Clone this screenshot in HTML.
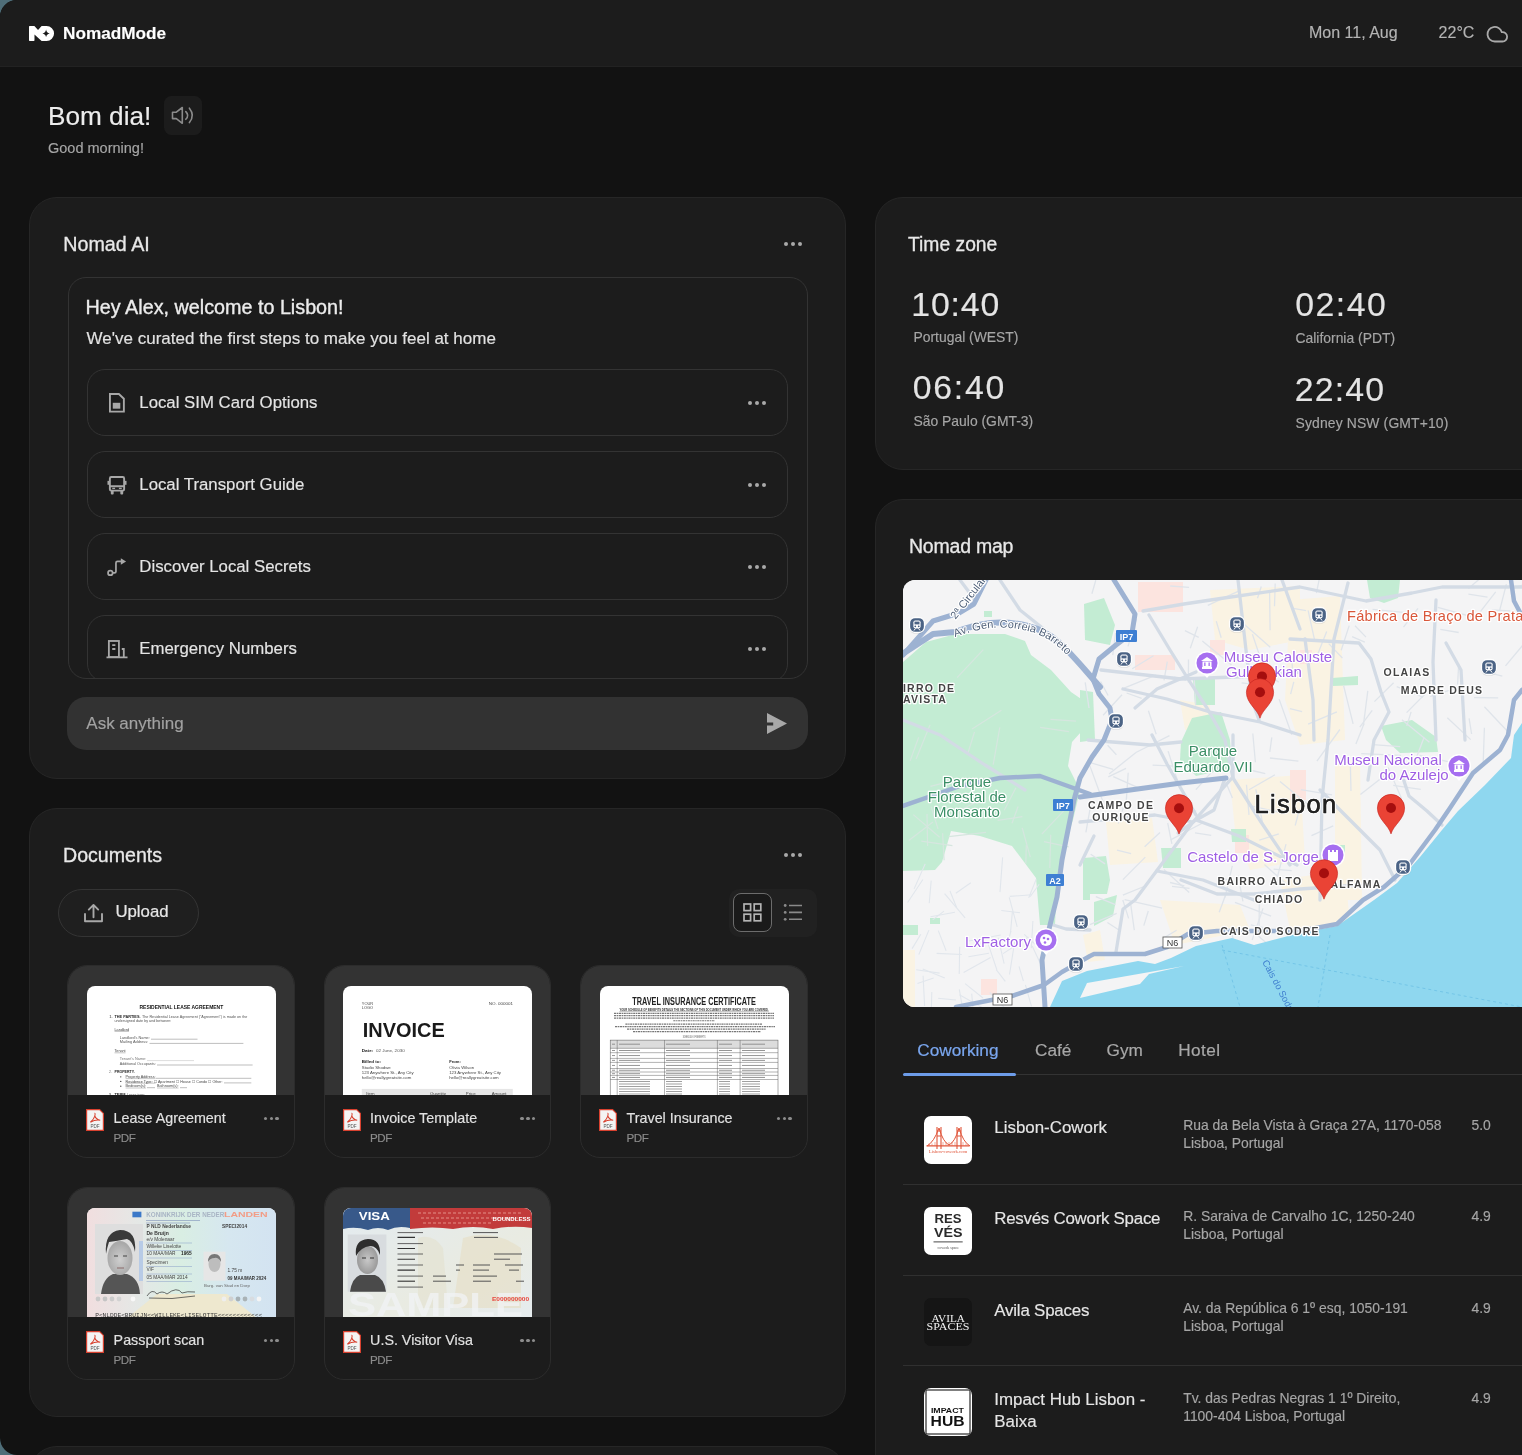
<!DOCTYPE html><html><head><meta charset="utf-8"><style>
html,body{margin:0;padding:0;width:1522px;height:1455px;overflow:hidden;background:#4f6e79;}
*{box-sizing:border-box;}
.win{position:absolute;left:0;top:0;width:1600px;height:1455px;background:#121212;border-radius:17px 0 0 17px;overflow:hidden;font-family:"Liberation Sans",sans-serif;}
.a{position:absolute;}
.t{position:absolute;white-space:nowrap;line-height:1;-webkit-text-stroke-width:0.15px;}
.win{will-change:transform;}
svg{position:absolute;overflow:visible;}
</style></head><body><div class="win">
<div class="a" style="left:0px;top:0px;width:1600px;height:67px;background:#1c1c1c;border-bottom:1px solid #222;"></div>
<svg style="left:28.6px;top:26px" width="25" height="15" viewBox="0 0 24.6 14.7"><path d="M0.6 0 H5.3 L8.9 3.8 L12.4 0 H17.3 A7.35 7.35 0 0 1 17.3 14.7 H12.4 L5.4 8.3 V14.1 Q5.4 14.7 4.8 14.7 H0.6 Q0 14.7 0 14.1 V0.6 Q0 0 0.6 0Z" fill="#fff"/><path d="M16.8 3.4 Q17.3 6.8 20.4 7.35 Q17.3 7.9 16.8 11.1 Q16.3 7.9 13.2 7.35 Q16.3 6.8 16.8 3.4Z" fill="#1c1c1c"/></svg>
<div class="t " style="left:63.00px;top:25.44px;font-size:17.2px;color:#ffffff;font-weight:700;">NomadMode</div>
<div class="t " style="left:1309.00px;top:25.06px;font-size:16px;color:#b4b4b4;font-weight:400;">Mon 11, Aug</div>
<div class="t " style="left:1438.60px;top:25.06px;font-size:16px;color:#b4b4b4;font-weight:400;">22°C</div>
<svg style="left:1485.2px;top:24.8px" width="23" height="18" viewBox="0 0 23 18"><path d="M9.8 16.5 H17.4 A4.7 4.7 0 1 0 16.8 7.14 A7.3 7.3 0 1 0 9.8 16.5Z" fill="none" stroke="#aaaaaa" stroke-width="1.8" stroke-linejoin="round"/></svg>
<div class="t " style="left:48.00px;top:102.62px;font-size:26.2px;color:#ececec;font-weight:400;">Bom dia!</div>
<div class="a" style="left:164px;top:96px;width:38px;height:39px;background:#1c1c1c;border-radius:7.5px;"></div>
<svg style="left:171px;top:106px" width="24" height="19" viewBox="0 0 24 19"><path d="M1.5 6.2 H5.3 L11.3 1.5 V17.3 L5.3 12.6 H1.5Z" fill="none" stroke="#8a8a8a" stroke-width="1.6" stroke-linejoin="round"/><path d="M14.8 5.6 Q18.6 9.4 14.8 13.3" fill="none" stroke="#8a8a8a" stroke-width="1.6" stroke-linecap="round"/><path d="M18.4 2.2 Q24.2 9.4 18.4 16.6" fill="none" stroke="#8a8a8a" stroke-width="1.6" stroke-linecap="round"/></svg>
<div class="t " style="left:48.00px;top:140.73px;font-size:14.5px;color:#a6a6a6;font-weight:400;">Good morning!</div>
<div class="a" style="left:28.5px;top:196.5px;width:817px;height:582px;background:#1c1c1c;border:1px solid #262626;border-radius:28px;"></div>
<div class="t " style="left:63.30px;top:235.12px;font-size:19.7px;color:#e8e8e8;font-weight:400;-webkit-text-stroke:0.3px #e8e8e8;">Nomad AI</div>
<div class="a" style="left:784px;top:242px;width:4px;height:4px;border-radius:50%;background:#a9a9a9"></div><div class="a" style="left:791px;top:242px;width:4px;height:4px;border-radius:50%;background:#a9a9a9"></div><div class="a" style="left:798px;top:242px;width:4px;height:4px;border-radius:50%;background:#a9a9a9"></div>
<div class="a" style="left:67.5px;top:277px;width:740px;height:402px;border:1px solid #333;border-radius:18px;overflow:hidden;">
<div class="t " style="left:17.10px;top:20.18px;font-size:19.75px;color:#ececec;font-weight:400;-webkit-text-stroke:0.35px #ececec;">Hey Alex, welcome to Lisbon!</div>
<div class="t " style="left:18.10px;top:51.91px;font-size:17px;color:#e2e2e2;font-weight:400;">We've curated the first steps to make you feel at home</div>
<div class="a" style="left:18.0px;top:91.30000000000001px;width:701.3px;height:67px;border:1px solid #333;border-radius:18px;"></div>
<div class="t " style="left:70.80px;top:116.68px;font-size:16.8px;color:#e4e4e4;font-weight:400;">Local SIM Card Options</div>
<div class="a" style="left:679.3px;top:122.80000000000001px;width:4px;height:4px;border-radius:50%;background:#a9a9a9"></div><div class="a" style="left:686.3px;top:122.80000000000001px;width:4px;height:4px;border-radius:50%;background:#a9a9a9"></div><div class="a" style="left:693.3px;top:122.80000000000001px;width:4px;height:4px;border-radius:50%;background:#a9a9a9"></div>
<div class="a" style="left:18.0px;top:173.3px;width:701.3px;height:67px;border:1px solid #333;border-radius:18px;"></div>
<div class="t " style="left:70.80px;top:198.68px;font-size:16.8px;color:#e4e4e4;font-weight:400;">Local Transport Guide</div>
<div class="a" style="left:679.3px;top:204.8px;width:4px;height:4px;border-radius:50%;background:#a9a9a9"></div><div class="a" style="left:686.3px;top:204.8px;width:4px;height:4px;border-radius:50%;background:#a9a9a9"></div><div class="a" style="left:693.3px;top:204.8px;width:4px;height:4px;border-radius:50%;background:#a9a9a9"></div>
<div class="a" style="left:18.0px;top:255.29999999999995px;width:701.3px;height:67px;border:1px solid #333;border-radius:18px;"></div>
<div class="t " style="left:70.80px;top:280.68px;font-size:16.8px;color:#e4e4e4;font-weight:400;">Discover Local Secrets</div>
<div class="a" style="left:679.3px;top:286.79999999999995px;width:4px;height:4px;border-radius:50%;background:#a9a9a9"></div><div class="a" style="left:686.3px;top:286.79999999999995px;width:4px;height:4px;border-radius:50%;background:#a9a9a9"></div><div class="a" style="left:693.3px;top:286.79999999999995px;width:4px;height:4px;border-radius:50%;background:#a9a9a9"></div>
<div class="a" style="left:18.0px;top:337.29999999999995px;width:701.3px;height:67px;border:1px solid #333;border-radius:18px;"></div>
<div class="t " style="left:70.80px;top:362.68px;font-size:16.8px;color:#e4e4e4;font-weight:400;">Emergency Numbers</div>
<div class="a" style="left:679.3px;top:368.79999999999995px;width:4px;height:4px;border-radius:50%;background:#a9a9a9"></div><div class="a" style="left:686.3px;top:368.79999999999995px;width:4px;height:4px;border-radius:50%;background:#a9a9a9"></div><div class="a" style="left:693.3px;top:368.79999999999995px;width:4px;height:4px;border-radius:50%;background:#a9a9a9"></div>
<svg style="left:40px;top:115px" width="16" height="19.6" viewBox="0 0 17 20" preserveAspectRatio="none"><path d="M1 1 H10.5 L15.8 5.8 V19 H1Z" fill="none" stroke="#a8a8a8" stroke-width="2" stroke-linejoin="miter"/><rect x="4" y="10" width="8" height="6" fill="#a8a8a8"/></svg>
<svg style="left:38px;top:197.5px" width="20" height="19.5" viewBox="0 0 21 20" preserveAspectRatio="none"><rect x="3" y="1" width="15" height="14" rx="1.5" fill="none" stroke="#a8a8a8" stroke-width="2"/><path d="M3 10.5 H18" stroke="#a8a8a8" stroke-width="2"/><rect x="0.5" y="5" width="2" height="4" fill="#a8a8a8"/><rect x="18.5" y="5" width="2" height="4" fill="#a8a8a8"/><rect x="5.5" y="12" width="3" height="1.4" fill="#a8a8a8"/><rect x="12.5" y="12" width="3" height="1.4" fill="#a8a8a8"/><rect x="4" y="15" width="3" height="4" rx="1" fill="#a8a8a8"/><rect x="14" y="15" width="3" height="4" rx="1" fill="#a8a8a8"/></svg>
<svg style="left:38px;top:278.5px" width="20" height="19.5" viewBox="0 0 21 20" preserveAspectRatio="none"><circle cx="3.5" cy="16.3" r="2.4" fill="none" stroke="#a8a8a8" stroke-width="1.8"/><path d="M6 16.3 H8 Q9.4 16.3 9.4 14.9 V6.2 Q9.4 4.6 11 4.6 H15" fill="none" stroke="#a8a8a8" stroke-width="1.8"/><path d="M14.5 1.2 L20 4.6 L14.5 8Z" fill="#a8a8a8"/></svg>
<svg style="left:37px;top:361.5px" width="22" height="18.5" viewBox="0 0 23 19" preserveAspectRatio="none"><rect x="3" y="1" width="10.5" height="16.5" fill="none" stroke="#a8a8a8" stroke-width="1.9"/><path d="M6.5 5.3 H9.8 M6.5 9.2 H9.8" stroke="#a8a8a8" stroke-width="1.9"/><path d="M16.5 9.2 H18.6 V17.5" fill="none" stroke="#a8a8a8" stroke-width="1.9"/><path d="M0.5 17.8 H22.5" stroke="#a8a8a8" stroke-width="1.9"/></svg>
</div>
<div class="a" style="left:67px;top:697px;width:740.5px;height:53px;background:#323232;border-radius:19px;"></div>
<div class="t " style="left:86.30px;top:714.81px;font-size:17px;color:#a2a2a2;font-weight:400;">Ask anything</div>
<svg style="left:766px;top:712px" width="22" height="23" viewBox="0 0 22 23"><path d="M1 1 L21 11.5 L1 22 V13.6 H7.2 V10.6 H1Z" fill="#a8a8a8"/></svg>
<div class="a" style="left:28.5px;top:808px;width:817px;height:609px;background:#1c1c1c;border:1px solid #262626;border-radius:28px;"></div>
<div class="t " style="left:63.00px;top:845.51px;font-size:19.6px;color:#e8e8e8;font-weight:400;-webkit-text-stroke:0.3px #e8e8e8;">Documents</div>
<div class="a" style="left:784px;top:853px;width:4px;height:4px;border-radius:50%;background:#a9a9a9"></div><div class="a" style="left:791px;top:853px;width:4px;height:4px;border-radius:50%;background:#a9a9a9"></div><div class="a" style="left:798px;top:853px;width:4px;height:4px;border-radius:50%;background:#a9a9a9"></div>
<div class="a" style="left:57.5px;top:889px;width:141.5px;height:47.5px;background:#1f1f1f;border:1px solid #343434;border-radius:24px;"></div>
<svg style="left:83px;top:903px" width="21" height="20" viewBox="0 0 21 20"><path d="M2 11 V18.2 H19 V11" fill="none" stroke="#a8a8a8" stroke-width="1.9" stroke-linejoin="round" stroke-linecap="round"/><path d="M10.5 14.2 V2.2 M5.8 6.6 L10.5 1.9 L15.2 6.6" fill="none" stroke="#a8a8a8" stroke-width="1.9" stroke-linecap="round" stroke-linejoin="round"/></svg>
<div class="t " style="left:115.40px;top:904.38px;font-size:16.8px;color:#e6e6e6;font-weight:400;-webkit-text-stroke:0.2px #e6e6e6;">Upload</div>
<div class="a" style="left:729px;top:889px;width:88px;height:47.5px;background:#212121;border-radius:10px;"></div>
<div class="a" style="left:733px;top:893px;width:39px;height:39px;background:#1a1a1a;border:1.5px solid #6c6c6c;border-radius:8px;"></div>
<svg style="left:743px;top:903px" width="19" height="19" viewBox="0 0 19 19" fill="none" stroke="#b4b4b4" stroke-width="1.7"><rect x="1" y="1" width="6.6" height="6.6"/><rect x="11.2" y="1" width="6.6" height="6.6"/><rect x="1" y="11.2" width="6.6" height="6.6"/><rect x="11.2" y="11.2" width="6.6" height="6.6"/></svg>
<svg style="left:783px;top:903px" width="21" height="19" viewBox="0 0 21 19"><circle cx="2.2" cy="2.5" r="1.4" fill="#8a8a8a"/><circle cx="2.2" cy="9.4" r="1.4" fill="#8a8a8a"/><circle cx="2.2" cy="16.3" r="1.4" fill="#8a8a8a"/><path d="M6 2.5 H19 M6 9.4 H19 M6 16.3 H19" stroke="#8a8a8a" stroke-width="1.6"/></svg>
<div class="a" style="left:67px;top:965px;width:227.5px;height:192.5px;border:1px solid #2c2c2c;border-radius:20px;overflow:hidden;background:#1c1c1c;">
<div class="a" style="left:-1px;top:-1px;width:229.5px;height:130px;background:#333333;"></div>
<div class="a" style="left:18.5px;top:19.8px;width:189px;height:109.2px;background:#fff;border-radius:8px 8px 0 0;overflow:hidden;"><svg width="189" height="110" viewBox="0 0 189 110" style="left:0;top:0"><text x="52.5" y="22.8" font-size="5.6" font-weight="700" fill="#111" font-family="Liberation Sans" text-anchor="start" textLength="83.7" lengthAdjust="spacingAndGlyphs" >RESIDENTIAL LEASE AGREEMENT</text><text x="22.2" y="31.8" font-size="4.2" font-weight="400" fill="#333" font-family="Liberation Sans" text-anchor="start" >1.</text><text x="27.5" y="31.8" font-size="4.2" font-weight="700" fill="#222" font-family="Liberation Sans" text-anchor="start" textLength="26" lengthAdjust="spacingAndGlyphs" >THE PARTIES.</text><text x="55" y="31.8" font-size="4.2" font-weight="400" fill="#555" font-family="Liberation Sans" text-anchor="start" textLength="105.3" lengthAdjust="spacingAndGlyphs" >The Residential Lease Agreement ("Agreement") is made on the</text><text x="27.5" y="35.8" font-size="4.2" font-weight="400" fill="#555" font-family="Liberation Sans" text-anchor="start" textLength="56.8" lengthAdjust="spacingAndGlyphs" >undersigned date by and between:</text><text x="27.5" y="44.7" font-size="4.2" font-weight="400" fill="#444" font-family="Liberation Sans" text-anchor="start" textLength="14.5" lengthAdjust="spacingAndGlyphs" >Landlord</text><path d="M27.5 45.4 H42" stroke="#555" stroke-width="0.35"/><text x="32.8" y="53.1" font-size="4.2" font-weight="400" fill="#555" font-family="Liberation Sans" text-anchor="start" textLength="30" lengthAdjust="spacingAndGlyphs" >Landlord's Name:</text><path d="M64 53.2 H110.5" stroke="#444" stroke-width="0.35"/><text x="32.8" y="57.3" font-size="4.2" font-weight="400" fill="#555" font-family="Liberation Sans" text-anchor="start" textLength="28.5" lengthAdjust="spacingAndGlyphs" >Mailing Address:</text><path d="M62.5 57.4 H156.4" stroke="#444" stroke-width="0.35"/><text x="27.5" y="66.1" font-size="4.2" font-weight="400" fill="#444" font-family="Liberation Sans" text-anchor="start" textLength="11.1" lengthAdjust="spacingAndGlyphs" >Tenant</text><path d="M27.5 66.8 H38.6" stroke="#555" stroke-width="0.35"/><text x="32.8" y="74.3" font-size="4.2" font-weight="400" fill="#777" font-family="Liberation Sans" text-anchor="start" textLength="26.5" lengthAdjust="spacingAndGlyphs" >Tenant's Name:</text><path d="M60 74.6 H107" stroke="#999" stroke-width="0.35"/><text x="32.8" y="78.7" font-size="4.2" font-weight="400" fill="#555" font-family="Liberation Sans" text-anchor="start" textLength="36" lengthAdjust="spacingAndGlyphs" >Additional Occupants:</text><path d="M70 79 H165.6" stroke="#444" stroke-width="0.35"/><text x="21.8" y="86.9" font-size="4.2" font-weight="400" fill="#888" font-family="Liberation Sans" text-anchor="start" >2.</text><text x="27.5" y="86.9" font-size="4.2" font-weight="700" fill="#222" font-family="Liberation Sans" text-anchor="start" textLength="20.2" lengthAdjust="spacingAndGlyphs" >PROPERTY.</text><circle cx="33.8" cy="90.8" r="0.6" fill="#222"/><text x="38.6" y="92" font-size="4.2" font-weight="400" fill="#444" font-family="Liberation Sans" text-anchor="start" textLength="30" lengthAdjust="spacingAndGlyphs" >Property Address:</text><path d="M38.6 92.6 H68.6" stroke="#444" stroke-width="0.3"/><path d="M69 92.3 H164.3" stroke="#444" stroke-width="0.35"/><circle cx="33.8" cy="95.39999999999999" r="0.6" fill="#222"/><text x="38.6" y="96.6" font-size="4.2" font-weight="400" fill="#444" font-family="Liberation Sans" text-anchor="start" textLength="97" lengthAdjust="spacingAndGlyphs" >Residence Type: ☐ Apartment ☐ House ☐ Condo ☐ Other:</text><path d="M38.6 97.19999999999999 H68.6" stroke="#444" stroke-width="0.3"/><path d="M137 96.89999999999999 H164.3" stroke="#444" stroke-width="0.35"/><circle cx="33.8" cy="100.2" r="0.6" fill="#222"/><text x="38.6" y="101.4" font-size="4.2" font-weight="400" fill="#444" font-family="Liberation Sans" text-anchor="start" textLength="20.5" lengthAdjust="spacingAndGlyphs" >Bedroom(s):</text><path d="M38.6 102.0 H59.1" stroke="#444" stroke-width="0.3"/><path d="M60 101.7 H68" stroke="#444" stroke-width="0.35"/><text x="70" y="101.4" font-size="4.2" font-weight="400" fill="#444" font-family="Liberation Sans" text-anchor="start" textLength="21.5" lengthAdjust="spacingAndGlyphs" >Bathroom(s):</text><path d="M70 102 H91.5" stroke="#444" stroke-width="0.3"/><path d="M93 101.7 H100" stroke="#444" stroke-width="0.35"/><text x="21.8" y="109.5" font-size="4.2" font-weight="400" fill="#333" font-family="Liberation Sans" text-anchor="start" >3.</text><text x="27.5" y="109.5" font-size="4.2" font-weight="700" fill="#222" font-family="Liberation Sans" text-anchor="start" textLength="12" lengthAdjust="spacingAndGlyphs" >TERM.</text><text x="40" y="109.5" font-size="4.2" font-weight="400" fill="#555" font-family="Liberation Sans" text-anchor="start" textLength="18" lengthAdjust="spacingAndGlyphs" >Lease type:</text></svg></div>
<svg style="left:18px;top:143px" width="18" height="22" viewBox="0 0 18 22"><path d="M0.6 0.6 H13.6 L17.4 4.4 V21.4 H0.6Z" fill="#f4f4f4" stroke="#d8412f" stroke-width="1.2"/><path d="M8.6 4 Q9.6 4.4 8.8 7 Q8.2 9.8 4.4 13.2 Q9.2 10.4 14.2 11.2 Q10.2 10.6 8.8 7" fill="none" stroke="#d8412f" stroke-width="1.1"/><text x="9" y="19" font-size="4.6" text-anchor="middle" fill="#555" font-family="Liberation Sans">PDF</text></svg><div class="t " style="left:45.60px;top:145.40px;font-size:14.3px;color:#e2e2e2;font-weight:400;">Lease Agreement</div>
<div class="t " style="left:45.60px;top:165.98px;font-size:11.6px;color:#8c8c8c;font-weight:400;letter-spacing:-0.5px;">PDF</div>
<div class="a" style="left:195.9px;top:150.79999999999998px;width:3.6px;height:3.6px;border-radius:50%;background:#8c8c8c"></div><div class="a" style="left:201.6px;top:150.79999999999998px;width:3.6px;height:3.6px;border-radius:50%;background:#8c8c8c"></div><div class="a" style="left:207.29999999999998px;top:150.79999999999998px;width:3.6px;height:3.6px;border-radius:50%;background:#8c8c8c"></div>
</div>
<div class="a" style="left:323.5px;top:965px;width:227.5px;height:192.5px;border:1px solid #2c2c2c;border-radius:20px;overflow:hidden;background:#1c1c1c;">
<div class="a" style="left:-1px;top:-1px;width:229.5px;height:130px;background:#333333;"></div>
<div class="a" style="left:18.5px;top:19.8px;width:189px;height:109.2px;background:#fff;border-radius:8px 8px 0 0;overflow:hidden;"><svg width="189" height="110" viewBox="0 0 189 110" style="left:0;top:0"><text x="18.8" y="18.6" font-size="4.3" font-weight="400" fill="#444" font-family="Liberation Sans" text-anchor="start" textLength="11.4" lengthAdjust="spacingAndGlyphs" >YOUR</text><text x="18.8" y="23.2" font-size="4.3" font-weight="400" fill="#444" font-family="Liberation Sans" text-anchor="start" textLength="11.4" lengthAdjust="spacingAndGlyphs" >LOGO</text><text x="145.8" y="18.8" font-size="4.3" font-weight="400" fill="#444" font-family="Liberation Sans" text-anchor="start" textLength="24.3" lengthAdjust="spacingAndGlyphs" >NO. 000001</text><text x="19.7" y="50.7" font-size="19.5" font-weight="700" fill="#1a1a1a" font-family="Liberation Sans" text-anchor="start" textLength="82" lengthAdjust="spacingAndGlyphs" >INVOICE</text><text x="18.8" y="65.5" font-size="4.3" font-weight="700" fill="#222" font-family="Liberation Sans" text-anchor="start" textLength="11.4" lengthAdjust="spacingAndGlyphs" >Date:</text><text x="33" y="65.5" font-size="4.3" font-weight="400" fill="#555" font-family="Liberation Sans" text-anchor="start" textLength="28.7" lengthAdjust="spacingAndGlyphs" >02 June, 2030</text><text x="18.8" y="77" font-size="4.3" font-weight="700" fill="#222" font-family="Liberation Sans" text-anchor="start" textLength="19.3" lengthAdjust="spacingAndGlyphs" >Billed to:</text><text x="106.2" y="77" font-size="4.3" font-weight="700" fill="#222" font-family="Liberation Sans" text-anchor="start" textLength="11.6" lengthAdjust="spacingAndGlyphs" >From:</text><text x="18.8" y="82.9" font-size="4.3" font-weight="400" fill="#444" font-family="Liberation Sans" text-anchor="start" >Studio Shodwe</text><text x="106.2" y="82.9" font-size="4.3" font-weight="400" fill="#444" font-family="Liberation Sans" text-anchor="start" >Olivia Wilson</text><text x="18.8" y="88.2" font-size="4.3" font-weight="400" fill="#444" font-family="Liberation Sans" text-anchor="start" >123 Anywhere St., Any City</text><text x="106.2" y="88.2" font-size="4.3" font-weight="400" fill="#444" font-family="Liberation Sans" text-anchor="start" >123 Anywhere St., Any City</text><text x="18.8" y="93.2" font-size="4.3" font-weight="400" fill="#444" font-family="Liberation Sans" text-anchor="start" >hello@reallygreatsite.com</text><text x="106.2" y="93.2" font-size="4.3" font-weight="400" fill="#444" font-family="Liberation Sans" text-anchor="start" >hello@reallygreatsite.com</text><rect x="18.8" y="102.9" width="151" height="10" fill="#e6e6e6"/><text x="23.2" y="108.6" font-size="4.3" font-weight="400" fill="#444" font-family="Liberation Sans" text-anchor="start" >Item</text><text x="86.9" y="108.6" font-size="4.3" font-weight="400" fill="#444" font-family="Liberation Sans" text-anchor="start" >Quantity</text><text x="122.8" y="108.6" font-size="4.3" font-weight="400" fill="#444" font-family="Liberation Sans" text-anchor="start" >Price</text><text x="148.7" y="108.6" font-size="4.3" font-weight="400" fill="#444" font-family="Liberation Sans" text-anchor="start" >Amount</text></svg></div>
<svg style="left:18px;top:143px" width="18" height="22" viewBox="0 0 18 22"><path d="M0.6 0.6 H13.6 L17.4 4.4 V21.4 H0.6Z" fill="#f4f4f4" stroke="#d8412f" stroke-width="1.2"/><path d="M8.6 4 Q9.6 4.4 8.8 7 Q8.2 9.8 4.4 13.2 Q9.2 10.4 14.2 11.2 Q10.2 10.6 8.8 7" fill="none" stroke="#d8412f" stroke-width="1.1"/><text x="9" y="19" font-size="4.6" text-anchor="middle" fill="#555" font-family="Liberation Sans">PDF</text></svg><div class="t " style="left:45.60px;top:145.40px;font-size:14.3px;color:#e2e2e2;font-weight:400;">Invoice Template</div>
<div class="t " style="left:45.60px;top:165.98px;font-size:11.6px;color:#8c8c8c;font-weight:400;letter-spacing:-0.5px;">PDF</div>
<div class="a" style="left:195.9px;top:150.79999999999998px;width:3.6px;height:3.6px;border-radius:50%;background:#8c8c8c"></div><div class="a" style="left:201.6px;top:150.79999999999998px;width:3.6px;height:3.6px;border-radius:50%;background:#8c8c8c"></div><div class="a" style="left:207.29999999999998px;top:150.79999999999998px;width:3.6px;height:3.6px;border-radius:50%;background:#8c8c8c"></div>
</div>
<div class="a" style="left:580px;top:965px;width:227.5px;height:192.5px;border:1px solid #2c2c2c;border-radius:20px;overflow:hidden;background:#1c1c1c;">
<div class="a" style="left:-1px;top:-1px;width:229.5px;height:130px;background:#333333;"></div>
<div class="a" style="left:18.5px;top:19.8px;width:189px;height:109.2px;background:#fff;border-radius:8px 8px 0 0;overflow:hidden;"><svg width="189" height="110" viewBox="0 0 189 110" style="left:0;top:0"><text x="32.3" y="18.6" font-size="10" font-weight="700" fill="#222" font-family="Liberation Sans" text-anchor="start" textLength="123.6" lengthAdjust="spacingAndGlyphs" >TRAVEL INSURANCE CERTIFICATE</text><text x="19.4" y="25.1" font-size="3.2" font-weight="700" fill="#333" font-family="Liberation Sans" text-anchor="start" textLength="149.4" lengthAdjust="spacingAndGlyphs" >YOUR SCHEDULE OF BENEFITS DETAILS THE SECTIONS OF THIS DOCUMENT UNDER WHICH YOU ARE COVERED.</text><path d="M19.4 25.6 H168.8" stroke="#333" stroke-width="0.3"/><path d="M14 27.400000000000002 H174" stroke="#777" stroke-width="1.1" stroke-dasharray="2.2 0.6 1.4 0.6"/><path d="M14 29.6 H174" stroke="#777" stroke-width="1.1" stroke-dasharray="2.2 0.6 1.4 0.6"/><path d="M14 32.1 H174" stroke="#777" stroke-width="1.1" stroke-dasharray="2.2 0.6 1.4 0.6"/><path d="M73.3 34.7 H114.9" stroke="#777" stroke-width="1.1" stroke-dasharray="2.2 0.6 1.4 0.6"/><path d="M25.4 38.1 H162.2" stroke="#777" stroke-width="1.1" stroke-dasharray="2.2 0.6 1.4 0.6"/><path d="M15 40.6 H175" stroke="#777" stroke-width="1.1" stroke-dasharray="2.2 0.6 1.4 0.6"/><path d="M27 43.1 H166" stroke="#777" stroke-width="1.1" stroke-dasharray="2.2 0.6 1.4 0.6"/><path d="M33 45.6 H161" stroke="#777" stroke-width="1.1" stroke-dasharray="2.2 0.6 1.4 0.6"/><text x="82.7" y="52.2" font-size="2.8" font-weight="400" fill="#555" font-family="Liberation Sans" text-anchor="start" textLength="22.7" lengthAdjust="spacingAndGlyphs" >SCHEDULE OF BENEFITS</text><rect x="10.2" y="54.1" width="167.8" height="8.2" fill="#dcdcdc"/><rect x="10.2" y="54.1" width="167.8" height="60" fill="none" stroke="#555" stroke-width="0.5"/><path d="M17.2 54.1 V110" stroke="#555" stroke-width="0.45"/><path d="M64.5 54.1 V110" stroke="#555" stroke-width="0.45"/><path d="M117.4 54.1 V110" stroke="#555" stroke-width="0.45"/><path d="M140.1 54.1 V110" stroke="#555" stroke-width="0.45"/><path d="M10.2 62.3 H178" stroke="#555" stroke-width="0.45"/><path d="M10.2 66.7 H178" stroke="#555" stroke-width="0.45"/><path d="M10.2 72.4 H178" stroke="#555" stroke-width="0.45"/><path d="M10.2 76.4 H178" stroke="#555" stroke-width="0.45"/><path d="M10.2 82.5 H178" stroke="#555" stroke-width="0.45"/><path d="M10.2 86 H178" stroke="#555" stroke-width="0.45"/><path d="M10.2 89.4 H178" stroke="#555" stroke-width="0.45"/><path d="M10.2 93.5 H178" stroke="#555" stroke-width="0.45"/><path d="M12 58.2 H15" stroke="#888" stroke-width="0.9"/><path d="M19 58.2 H40" stroke="#888" stroke-width="0.9"/><path d="M66 58.2 H90" stroke="#888" stroke-width="0.9"/><path d="M119 58.2 H132" stroke="#888" stroke-width="0.9"/><path d="M142 58.2 H165" stroke="#888" stroke-width="0.9"/><path d="M12 64.5 H15" stroke="#888" stroke-width="0.9"/><path d="M19 64.5 H40" stroke="#888" stroke-width="0.9"/><path d="M66 64.5 H90" stroke="#888" stroke-width="0.9"/><path d="M119 64.5 H132" stroke="#888" stroke-width="0.9"/><path d="M142 64.5 H165" stroke="#888" stroke-width="0.9"/><path d="M12 69.55000000000001 H15" stroke="#888" stroke-width="0.9"/><path d="M19 69.55000000000001 H40" stroke="#888" stroke-width="0.9"/><path d="M66 69.55000000000001 H90" stroke="#888" stroke-width="0.9"/><path d="M119 69.55000000000001 H132" stroke="#888" stroke-width="0.9"/><path d="M142 69.55000000000001 H165" stroke="#888" stroke-width="0.9"/><path d="M12 74.4 H15" stroke="#888" stroke-width="0.9"/><path d="M19 74.4 H40" stroke="#888" stroke-width="0.9"/><path d="M66 74.4 H90" stroke="#888" stroke-width="0.9"/><path d="M119 74.4 H132" stroke="#888" stroke-width="0.9"/><path d="M142 74.4 H165" stroke="#888" stroke-width="0.9"/><path d="M12 79.45 H15" stroke="#888" stroke-width="0.9"/><path d="M19 79.45 H40" stroke="#888" stroke-width="0.9"/><path d="M66 79.45 H90" stroke="#888" stroke-width="0.9"/><path d="M119 79.45 H132" stroke="#888" stroke-width="0.9"/><path d="M142 79.45 H165" stroke="#888" stroke-width="0.9"/><path d="M12 84.25 H15" stroke="#888" stroke-width="0.9"/><path d="M19 84.25 H40" stroke="#888" stroke-width="0.9"/><path d="M66 84.25 H90" stroke="#888" stroke-width="0.9"/><path d="M119 84.25 H132" stroke="#888" stroke-width="0.9"/><path d="M142 84.25 H165" stroke="#888" stroke-width="0.9"/><path d="M12 87.7 H15" stroke="#888" stroke-width="0.9"/><path d="M19 87.7 H40" stroke="#888" stroke-width="0.9"/><path d="M66 87.7 H90" stroke="#888" stroke-width="0.9"/><path d="M119 87.7 H132" stroke="#888" stroke-width="0.9"/><path d="M142 87.7 H165" stroke="#888" stroke-width="0.9"/><path d="M12 91.45 H15" stroke="#888" stroke-width="0.9"/><path d="M19 91.45 H40" stroke="#888" stroke-width="0.9"/><path d="M66 91.45 H90" stroke="#888" stroke-width="0.9"/><path d="M119 91.45 H132" stroke="#888" stroke-width="0.9"/><path d="M142 91.45 H165" stroke="#888" stroke-width="0.9"/><path d="M19 95.5 H50" stroke="#888" stroke-width="0.8"/><path d="M66 95.5 H82" stroke="#888" stroke-width="0.8"/><path d="M119 95.5 H130" stroke="#888" stroke-width="0.8"/><path d="M142 95.5 H160" stroke="#888" stroke-width="0.8"/><path d="M19 98 H50" stroke="#888" stroke-width="0.8"/><path d="M66 98 H82" stroke="#888" stroke-width="0.8"/><path d="M119 98 H130" stroke="#888" stroke-width="0.8"/><path d="M142 98 H160" stroke="#888" stroke-width="0.8"/><path d="M19 100.5 H50" stroke="#888" stroke-width="0.8"/><path d="M66 100.5 H82" stroke="#888" stroke-width="0.8"/><path d="M119 100.5 H130" stroke="#888" stroke-width="0.8"/><path d="M142 100.5 H160" stroke="#888" stroke-width="0.8"/><path d="M19 103 H50" stroke="#888" stroke-width="0.8"/><path d="M66 103 H82" stroke="#888" stroke-width="0.8"/><path d="M119 103 H130" stroke="#888" stroke-width="0.8"/><path d="M142 103 H160" stroke="#888" stroke-width="0.8"/><path d="M19 105.5 H50" stroke="#888" stroke-width="0.8"/><path d="M66 105.5 H82" stroke="#888" stroke-width="0.8"/><path d="M119 105.5 H130" stroke="#888" stroke-width="0.8"/><path d="M142 105.5 H160" stroke="#888" stroke-width="0.8"/><path d="M19 108 H50" stroke="#888" stroke-width="0.8"/><path d="M66 108 H82" stroke="#888" stroke-width="0.8"/><path d="M119 108 H130" stroke="#888" stroke-width="0.8"/><path d="M142 108 H160" stroke="#888" stroke-width="0.8"/></svg></div>
<svg style="left:18px;top:143px" width="18" height="22" viewBox="0 0 18 22"><path d="M0.6 0.6 H13.6 L17.4 4.4 V21.4 H0.6Z" fill="#f4f4f4" stroke="#d8412f" stroke-width="1.2"/><path d="M8.6 4 Q9.6 4.4 8.8 7 Q8.2 9.8 4.4 13.2 Q9.2 10.4 14.2 11.2 Q10.2 10.6 8.8 7" fill="none" stroke="#d8412f" stroke-width="1.1"/><text x="9" y="19" font-size="4.6" text-anchor="middle" fill="#555" font-family="Liberation Sans">PDF</text></svg><div class="t " style="left:45.60px;top:145.40px;font-size:14.3px;color:#e2e2e2;font-weight:400;">Travel Insurance</div>
<div class="t " style="left:45.60px;top:165.98px;font-size:11.6px;color:#8c8c8c;font-weight:400;letter-spacing:-0.5px;">PDF</div>
<div class="a" style="left:195.9px;top:150.79999999999998px;width:3.6px;height:3.6px;border-radius:50%;background:#8c8c8c"></div><div class="a" style="left:201.6px;top:150.79999999999998px;width:3.6px;height:3.6px;border-radius:50%;background:#8c8c8c"></div><div class="a" style="left:207.29999999999998px;top:150.79999999999998px;width:3.6px;height:3.6px;border-radius:50%;background:#8c8c8c"></div>
</div>
<div class="a" style="left:67px;top:1187px;width:227.5px;height:192.5px;border:1px solid #2c2c2c;border-radius:20px;overflow:hidden;background:#1c1c1c;">
<div class="a" style="left:-1px;top:-1px;width:229.5px;height:130px;background:#333333;"></div>
<div class="a" style="left:18.5px;top:19.8px;width:189px;height:109.2px;background:#fff;border-radius:8px 8px 0 0;overflow:hidden;"><svg width="189" height="110" viewBox="0 0 189 110" style="left:0;top:0"><defs><linearGradient id="pg" x1="0" x2="1" y1="0" y2="0"><stop offset="0" stop-color="#f1dedf"/><stop offset="0.28" stop-color="#e4e8e6"/><stop offset="0.5" stop-color="#d9eee3"/><stop offset="0.75" stop-color="#d6e7f0"/><stop offset="1" stop-color="#d3e3f1"/></linearGradient><radialGradient id="face" cx="0.5" cy="0.55" r="0.5"><stop offset="0" stop-color="#cfcfcf"/><stop offset="1" stop-color="#a9a9a9"/></radialGradient></defs><rect width="189" height="110" fill="url(#pg)"/><path d="M40 110 L70 86 L140 86 L170 110Z" fill="#eee8cf"/><rect x="8" y="16" width="48" height="70" fill="#dedede"/><path d="M14 86 Q16 70 26 66 L40 66 Q52 70 53 86Z" fill="#555"/><ellipse cx="33" cy="50" rx="12.5" ry="17" fill="url(#face)"/><path d="M19 46 Q17 24 33 22 Q50 22 48 44 Q46 33 40 31 Q30 33 22 34 Q20 40 19 46Z" fill="#3a3a3a"/><path d="M27 48 h4 M36 48 h4" stroke="#444" stroke-width="1.2"/><path d="M30 60 h7" stroke="#8a6a6a" stroke-width="1"/><rect x="45.4" y="3.7" width="9" height="5.6" fill="#3b78c8"/><text x="59.2" y="9" font-size="6.8" font-weight="700" fill="#a8b4c4" font-family="Liberation Sans" text-anchor="start" textLength="78" lengthAdjust="spacingAndGlyphs" >KONINKRIJK DER NEDER</text><text x="137" y="9" font-size="6.8" font-weight="700" fill="#f29c86" font-family="Liberation Sans" text-anchor="start" textLength="43.7" lengthAdjust="spacingAndGlyphs" >LANDEN</text><path d="M59 12.5 H113" stroke="#6a7fb0" stroke-width="0.5"/><path d="M59 15 H103" stroke="#6a7fb0" stroke-width="0.5"/><text x="59.5" y="19.8" font-size="4.8" font-weight="700" fill="#444" font-family="Liberation Sans" text-anchor="start" >P   NLD Nederlandse</text><text x="135" y="19.8" font-size="4.8" font-weight="700" fill="#444" font-family="Liberation Sans" text-anchor="start" >SPECI2014</text><text x="59.5" y="27" font-size="5" font-weight="700" fill="#333" font-family="Liberation Sans" text-anchor="start" >De Bruijn</text><text x="59.5" y="32.5" font-size="4.8" font-weight="400" fill="#444" font-family="Liberation Sans" text-anchor="start" >e/v Molenaar</text><text x="59.5" y="40" font-size="4.8" font-weight="400" fill="#444" font-family="Liberation Sans" text-anchor="start" >Willeke Liselotte</text><text x="59.5" y="47.3" font-size="4.8" font-weight="400" fill="#444" font-family="Liberation Sans" text-anchor="start" >10 MAA/MAR</text><text x="94" y="47.3" font-size="4.8" font-weight="700" fill="#222" font-family="Liberation Sans" text-anchor="start" >1965</text><text x="59.5" y="55.8" font-size="4.8" font-weight="400" fill="#444" font-family="Liberation Sans" text-anchor="start" >Specimen</text><text x="59.5" y="63.3" font-size="4.8" font-weight="400" fill="#444" font-family="Liberation Sans" text-anchor="start" >V/F</text><text x="59.5" y="71" font-size="4.8" font-weight="400" fill="#444" font-family="Liberation Sans" text-anchor="start" >05 MAA/MAR 2014</text><path d="M59.5 35 H105" stroke="#7f95c4" stroke-width="0.45"/><path d="M59.5 42.5 H105" stroke="#7f95c4" stroke-width="0.45"/><path d="M59.5 50 H105" stroke="#7f95c4" stroke-width="0.45"/><path d="M59.5 58.5 H105" stroke="#7f95c4" stroke-width="0.45"/><path d="M59.5 66 H105" stroke="#7f95c4" stroke-width="0.45"/><path d="M59.5 73.5 H105" stroke="#7f95c4" stroke-width="0.45"/><rect x="52" y="33" width="4" height="40" fill="#b8cbe6"/><rect x="116.5" y="43.7" width="22" height="29" fill="#e6e6e6"/><ellipse cx="127.5" cy="56" rx="6" ry="8" fill="#bdbdbd"/><path d="M121 54 Q121 46 127.5 46 Q134 46 134 54 Q131 49 127.5 50 Q123 50 121 54Z" fill="#777"/><text x="140.6" y="64" font-size="4.8" font-weight="400" fill="#444" font-family="Liberation Sans" text-anchor="start" >1.75 m</text><text x="140.6" y="71.5" font-size="4.8" font-weight="700" fill="#333" font-family="Liberation Sans" text-anchor="start" textLength="38.5" lengthAdjust="spacingAndGlyphs" >09 MAA/MAR 2024</text><text x="117" y="79" font-size="4.4" font-weight="400" fill="#666" font-family="Liberation Sans" text-anchor="start" >Burg. van Stad en Dorp</text><path d="M60 88 Q65 80 70 86 Q75 82 80 86 Q90 78 95 85 Q100 83 108 84 M62 90 Q85 92 108 88" fill="none" stroke="#333" stroke-width="0.7"/><circle cx="11" cy="91" r="2.4" fill="#c9c9c9"/><circle cx="18" cy="91" r="2.4" fill="#c4c4c4"/><circle cx="25" cy="91" r="2.4" fill="#cbcbcb"/><circle cx="32" cy="91" r="2.4" fill="#d2d2d2"/><circle cx="46" cy="91" r="2.4" fill="#f8f8f8"/><circle cx="137" cy="91" r="2.4" fill="#eeeeee"/><circle cx="144" cy="91" r="2.4" fill="#d0d0d0"/><circle cx="151" cy="91" r="2.4" fill="#a6b0b4"/><circle cx="158" cy="91" r="2.4" fill="#aab3b6"/><circle cx="165" cy="91" r="2.4" fill="#d8dce0"/><circle cx="172" cy="91" r="2.4" fill="#f5f5f5"/><text x="8.2" y="108.5" font-size="5.4" font-weight="400" fill="#3a3a3a" font-family="Liberation Mono" text-anchor="start" textLength="167" lengthAdjust="spacingAndGlyphs" >P&lt;NLDDE&lt;BRUIJN&lt;&lt;WILLEKE&lt;LISELOTTE&lt;&lt;&lt;&lt;&lt;&lt;&lt;&lt;&lt;&lt;&lt;&lt;</text></svg></div>
<svg style="left:18px;top:143px" width="18" height="22" viewBox="0 0 18 22"><path d="M0.6 0.6 H13.6 L17.4 4.4 V21.4 H0.6Z" fill="#f4f4f4" stroke="#d8412f" stroke-width="1.2"/><path d="M8.6 4 Q9.6 4.4 8.8 7 Q8.2 9.8 4.4 13.2 Q9.2 10.4 14.2 11.2 Q10.2 10.6 8.8 7" fill="none" stroke="#d8412f" stroke-width="1.1"/><text x="9" y="19" font-size="4.6" text-anchor="middle" fill="#555" font-family="Liberation Sans">PDF</text></svg><div class="t " style="left:45.60px;top:145.40px;font-size:14.3px;color:#e2e2e2;font-weight:400;">Passport scan</div>
<div class="t " style="left:45.60px;top:165.98px;font-size:11.6px;color:#8c8c8c;font-weight:400;letter-spacing:-0.5px;">PDF</div>
<div class="a" style="left:195.9px;top:150.79999999999998px;width:3.6px;height:3.6px;border-radius:50%;background:#8c8c8c"></div><div class="a" style="left:201.6px;top:150.79999999999998px;width:3.6px;height:3.6px;border-radius:50%;background:#8c8c8c"></div><div class="a" style="left:207.29999999999998px;top:150.79999999999998px;width:3.6px;height:3.6px;border-radius:50%;background:#8c8c8c"></div>
</div>
<div class="a" style="left:323.5px;top:1187px;width:227.5px;height:192.5px;border:1px solid #2c2c2c;border-radius:20px;overflow:hidden;background:#1c1c1c;">
<div class="a" style="left:-1px;top:-1px;width:229.5px;height:130px;background:#333333;"></div>
<div class="a" style="left:18.5px;top:19.8px;width:189px;height:109.2px;background:#fff;border-radius:8px 8px 0 0;overflow:hidden;"><svg width="189" height="110" viewBox="0 0 189 110" style="left:0;top:0"><defs><linearGradient id="vg" x1="0" x2="1" y1="0" y2="1"><stop offset="0" stop-color="#e3ebf0"/><stop offset="0.6" stop-color="#e9ebe2"/><stop offset="1" stop-color="#e6ecef"/></linearGradient><radialGradient id="vface" cx="0.5" cy="0.5" r="0.5"><stop offset="0" stop-color="#c8c8c8"/><stop offset="1" stop-color="#9a9a9a"/></radialGradient></defs><rect width="189" height="110" fill="url(#vg)"/><path d="M120 30 Q150 20 178 40 L178 100 L110 100Z" fill="#e6e1cc" opacity="0.8"/><path d="M75 30 Q90 25 100 40 L105 100 L75 100Z" fill="#e4e3d2" opacity="0.7"/><path d="M0 0 H67 V20 Q55 17 45 22 Q35 18 25 22 Q12 18 0 21Z" fill="#38598a"/><path d="M67 0 H189 V20 Q170 17 150 21 Q130 17 110 21 Q90 18 67 21Z" fill="#c23b3b"/><path d="M75 5 H180 M78 10 H175 M80 15 H150" stroke="#d9746f" stroke-width="1.3" stroke-dasharray="3 2"/><text x="15.8" y="12" font-size="10.5" font-weight="700" fill="#ffffff" font-family="Liberation Sans" text-anchor="start" textLength="31" lengthAdjust="spacingAndGlyphs" >VISA</text><text x="149.6" y="13.4" font-size="4.6" font-weight="700" fill="#ffffff" font-family="Liberation Sans" text-anchor="start" textLength="37.9" lengthAdjust="spacingAndGlyphs" >BOUNDLESS</text><rect x="4.7" y="26.5" width="38.7" height="57.3" fill="#d8dcdf"/><path d="M7 83.8 Q9 70 17 67 L32 67 Q41 70 43 83.8Z" fill="#4a4a4a"/><ellipse cx="24.5" cy="52" rx="10.5" ry="14" fill="url(#vface)"/><path d="M13 48 Q11 32 25 31 Q38 31 37 47 Q34 38 27 38 Q18 39 13 48Z" fill="#2e2e2e"/><path d="M19 50 h4 M27 50 h4" stroke="#333" stroke-width="1.2"/><path d="M54.5 24.6 H80" stroke="#555" stroke-width="0.9"/><path d="M54.5 29.400000000000002 H72" stroke="#333" stroke-width="1.1"/><path d="M54.5 35.599999999999994 H80" stroke="#555" stroke-width="0.9"/><path d="M54.5 40.5 H72" stroke="#333" stroke-width="1.1"/><path d="M54.5 46.0 H80" stroke="#555" stroke-width="0.9"/><path d="M54.5 51.199999999999996 H72" stroke="#333" stroke-width="1.1"/><path d="M54.5 57.0 H80" stroke="#555" stroke-width="0.9"/><path d="M54.5 62.099999999999994 H72" stroke="#333" stroke-width="1.1"/><path d="M54.5 68.1 H80" stroke="#555" stroke-width="0.9"/><path d="M54.5 73.2 H72" stroke="#333" stroke-width="1.1"/><path d="M54.5 79.1 H80" stroke="#555" stroke-width="0.9"/><path d="M130 24.6 H155" stroke="#555" stroke-width="1"/><path d="M131 29.400000000000002 H155" stroke="#555" stroke-width="1"/><path d="M151 46.0 H179" stroke="#555" stroke-width="1"/><path d="M151 51.199999999999996 H167" stroke="#555" stroke-width="1"/><path d="M113 57.0 H121" stroke="#555" stroke-width="1"/><path d="M130 57.0 H147" stroke="#555" stroke-width="1"/><path d="M162 57.0 H180" stroke="#555" stroke-width="1"/><path d="M113 62.099999999999994 H117" stroke="#555" stroke-width="1"/><path d="M130 62.099999999999994 H146" stroke="#555" stroke-width="1"/><path d="M166 62.099999999999994 H176" stroke="#555" stroke-width="1"/><path d="M90 68.1 H103" stroke="#555" stroke-width="1"/><path d="M130 68.1 H154" stroke="#555" stroke-width="1"/><path d="M90 73.2 H108" stroke="#555" stroke-width="1"/><path d="M130 73.2 H148" stroke="#555" stroke-width="1"/><path d="M173 73.2 H181" stroke="#555" stroke-width="1"/><text x="5" y="108" font-size="34" font-weight="700" fill="#f2f4f6" font-family="Liberation Sans" text-anchor="start" textLength="175" lengthAdjust="spacingAndGlyphs" opacity="0.75">SAMPLE</text><text x="148.9" y="93.2" font-size="6" font-weight="700" fill="#e8453c" font-family="Liberation Sans" text-anchor="start" textLength="37.3" lengthAdjust="spacingAndGlyphs" >E000000000</text></svg></div>
<svg style="left:18px;top:143px" width="18" height="22" viewBox="0 0 18 22"><path d="M0.6 0.6 H13.6 L17.4 4.4 V21.4 H0.6Z" fill="#f4f4f4" stroke="#d8412f" stroke-width="1.2"/><path d="M8.6 4 Q9.6 4.4 8.8 7 Q8.2 9.8 4.4 13.2 Q9.2 10.4 14.2 11.2 Q10.2 10.6 8.8 7" fill="none" stroke="#d8412f" stroke-width="1.1"/><text x="9" y="19" font-size="4.6" text-anchor="middle" fill="#555" font-family="Liberation Sans">PDF</text></svg><div class="t " style="left:45.60px;top:145.40px;font-size:14.3px;color:#e2e2e2;font-weight:400;">U.S. Visitor Visa</div>
<div class="t " style="left:45.60px;top:165.98px;font-size:11.6px;color:#8c8c8c;font-weight:400;letter-spacing:-0.5px;">PDF</div>
<div class="a" style="left:195.9px;top:150.79999999999998px;width:3.6px;height:3.6px;border-radius:50%;background:#8c8c8c"></div><div class="a" style="left:201.6px;top:150.79999999999998px;width:3.6px;height:3.6px;border-radius:50%;background:#8c8c8c"></div><div class="a" style="left:207.29999999999998px;top:150.79999999999998px;width:3.6px;height:3.6px;border-radius:50%;background:#8c8c8c"></div>
</div>
<div class="a" style="left:28.5px;top:1446px;width:817px;height:200px;background:#1c1c1c;border:1px solid #262626;border-radius:28px;"></div>
<div class="a" style="left:874.5px;top:196.5px;width:900px;height:273.5px;background:#1c1c1c;border:1px solid #262626;border-radius:28px;"></div>
<div class="t " style="left:908.00px;top:234.66px;font-size:19.3px;color:#e8e8e8;font-weight:400;-webkit-text-stroke:0.3px #e8e8e8;">Time zone</div>
<div class="t " style="left:911.30px;top:287.59px;font-size:33.8px;color:#e4e4e4;font-weight:400;letter-spacing:0.85px;">10:40</div>
<div class="t " style="left:913.50px;top:331.23px;font-size:13.9px;color:#a6a6a6;font-weight:400;">Portugal (WEST)</div>
<div class="t " style="left:912.70px;top:371.39px;font-size:33.8px;color:#e4e4e4;font-weight:400;letter-spacing:1.75px;">06:40</div>
<div class="t " style="left:913.50px;top:414.93px;font-size:13.9px;color:#a6a6a6;font-weight:400;">São Paulo (GMT-3)</div>
<div class="t " style="left:1295.20px;top:288.39px;font-size:33.8px;color:#e4e4e4;font-weight:400;letter-spacing:1.5px;">02:40</div>
<div class="t " style="left:1295.50px;top:332.23px;font-size:13.9px;color:#a6a6a6;font-weight:400;">California (PDT)</div>
<div class="t " style="left:1294.70px;top:373.39px;font-size:33.8px;color:#e4e4e4;font-weight:400;letter-spacing:1.2px;">22:40</div>
<div class="t " style="left:1295.50px;top:416.73px;font-size:13.9px;color:#a6a6a6;font-weight:400;letter-spacing:0.15px;">Sydney NSW (GMT+10)</div>
<div class="a" style="left:874.5px;top:499px;width:900px;height:1100px;background:#1c1c1c;border:1px solid #262626;border-radius:28px;"></div>
<div class="t " style="left:909.00px;top:537.49px;font-size:19.5px;color:#e8e8e8;font-weight:400;letter-spacing:-0.22px;-webkit-text-stroke:0.3px #e8e8e8;">Nomad map</div>
<div class="a" style="left:903px;top:580px;width:640px;height:427px;border-radius:12px;overflow:hidden;background:#f2f3f5;"><svg width="640" height="427" viewBox="903 580 640 427" style="left:0;top:0"><rect x="903" y="580" width="640" height="427" fill="#f4f4f5"/><path d="M1210 590 L1300 586 L1300 640 L1250 650 L1215 640Z" fill="#faf3e3"/><path d="M1290 600 L1340 596 L1345 740 L1300 745 L1285 700Z" fill="#faf3e3"/><path d="M1106 822 L1152 818 L1158 862 L1110 865Z" fill="#faf3e3"/><path d="M1230 780 L1300 775 L1305 860 L1250 870 L1235 830Z" fill="#faf3e3"/><path d="M1280 880 L1345 870 L1350 925 L1290 930Z" fill="#faf3e3"/><path d="M1160 900 L1240 905 L1250 930 L1175 945Z" fill="#faf3e3"/><path d="M1335 760 L1360 760 L1362 900 L1335 900Z" fill="#faf3e3"/><path d="M1180 700 L1210 705 L1210 730 L1185 730Z" fill="#faf3e3"/><path d="M903 950 L915 950 L915 1007 L903 1007Z" fill="#faf3e3"/><path d="M1083 935 L1100 930 L1105 960 L1088 962Z" fill="#faf3e3"/><rect x="1138" y="582" width="45" height="30" fill="#fce4df"/><rect x="1135" y="655" width="40" height="15" fill="#fce4df"/><rect x="1210" y="640" width="15" height="15" fill="#fce4df"/><rect x="1290" y="770" width="16" height="30" fill="#fce4df"/><rect x="1235" y="835" width="14" height="18" fill="#fce4df"/><rect x="981" y="979" width="16" height="16" fill="#fce4df"/><rect x="1300" y="650" width="12" height="14" fill="#fce4df"/><path d="M903 662 L926 642 L956 634 L1005 634 L1025 641 L1031 655 L1051 670 L1071 692 L1090 705 L1090 722 L1072 742 L1068 766 L1080 790 L1073 820 L1063 850 L1057 880 L1055 925 L1040 925 L1036 878 L1012 846 L980 836 L951 831 L942 862 L935 870 L903 871Z" fill="#c3ecd3"/><path d="M1084 604 L1104 598 L1115 625 L1110 645 L1085 640Z" fill="#c3ecd3"/><path d="M984 611 L992 611 L992 617 L984 617Z" fill="#c3ecd3"/><path d="M1080 690 L1093 692 L1095 740 L1080 742Z" fill="#c3ecd3"/><path d="M1181 742 L1192 718 L1221 712 L1230 740 L1232 768 L1196 776 L1180 760Z" fill="#c3ecd3"/><path d="M1367 580 L1400 580 L1398 598 L1384 603 L1370 598Z" fill="#c3ecd3"/><path d="M1381 726 L1412 720 L1436 737 L1438 752 L1400 753 L1386 740Z" fill="#c3ecd3"/><path d="M1332 678 L1358 676 L1358 685 L1333 686Z" fill="#c3ecd3"/><path d="M1193 680 L1215 678 L1215 705 L1195 705Z" fill="#c3ecd3"/><path d="M1231 829 L1246 829 L1246 842 L1232 842Z" fill="#c3ecd3"/><path d="M1161 848 L1181 848 L1181 868 L1163 868Z" fill="#c3ecd3"/><path d="M1084 858 L1106 856 L1110 880 L1107 894 L1086 894Z" fill="#c3ecd3"/><path d="M1094 902 L1117 895 L1113 916 L1094 926Z" fill="#c3ecd3"/><path d="M1083 860 L1090 860 L1090 900 L1083 900Z" fill="#c3ecd3"/><path d="M903 925 L918 925 L918 935 L903 935Z" fill="#c3ecd3"/><path d="M930 918 L940 918 L940 924 L930 924Z" fill="#c3ecd3"/><path d="M1335 845 L1345 845 L1345 855 L1335 855Z" fill="#c3ecd3"/><path d="M1280.0 781.5 L1307.8 804.3" stroke="#dfe4ea" stroke-width="1.3"/><path d="M1163.9 869.4 L1189.2 892.4" stroke="#dfe4ea" stroke-width="1.3"/><path d="M1121.6 689.2 L1155.8 675.2" stroke="#dfe4ea" stroke-width="1.3"/><path d="M1360.4 794.4 L1384.4 775.8" stroke="#dfe4ea" stroke-width="1.3"/><path d="M1352.1 636.7 L1364.8 642.1" stroke="#dfe4ea" stroke-width="1.3"/><path d="M1095.8 896.6 L1115.4 904.6" stroke="#dfe4ea" stroke-width="1.3"/><path d="M1341.2 650.3 L1349.2 625.6" stroke="#dfe4ea" stroke-width="1.3"/><path d="M1372.8 744.6 L1400.2 746.6" stroke="#dfe4ea" stroke-width="1.3"/><path d="M1491.8 610.0 L1510.2 610.8" stroke="#dfe4ea" stroke-width="1.3"/><path d="M1207.8 605.3 L1240.2 590.4" stroke="#dfe4ea" stroke-width="1.3"/><path d="M1250.8 924.9 L1287.9 933.0" stroke="#dfe4ea" stroke-width="1.3"/><path d="M1103.1 715.2 L1122.0 694.7" stroke="#dfe4ea" stroke-width="1.3"/><path d="M1167.7 823.0 L1171.9 843.9" stroke="#dfe4ea" stroke-width="1.3"/><path d="M1132.2 668.7 L1153.5 655.7" stroke="#dfe4ea" stroke-width="1.3"/><path d="M1295.2 825.5 L1299.6 808.8" stroke="#dfe4ea" stroke-width="1.3"/><path d="M1403.5 627.1 L1418.0 608.3" stroke="#dfe4ea" stroke-width="1.3"/><path d="M1174.1 677.1 L1186.2 680.2" stroke="#dfe4ea" stroke-width="1.3"/><path d="M1162.8 938.5 L1176.6 930.3" stroke="#dfe4ea" stroke-width="1.3"/><path d="M1275.2 583.4 L1274.5 606.3" stroke="#dfe4ea" stroke-width="1.3"/><path d="M1112.8 655.1 L1115.6 633.0" stroke="#dfe4ea" stroke-width="1.3"/><path d="M1355.0 625.8 L1366.0 637.1" stroke="#dfe4ea" stroke-width="1.3"/><path d="M1250.7 805.8 L1284.7 813.5" stroke="#dfe4ea" stroke-width="1.3"/><path d="M1190.3 648.3 L1197.6 626.7" stroke="#dfe4ea" stroke-width="1.3"/><path d="M1293.3 608.3 L1306.1 610.6" stroke="#dfe4ea" stroke-width="1.3"/><path d="M1505.5 665.8 L1528.0 639.0" stroke="#dfe4ea" stroke-width="1.3"/><path d="M1343.6 685.6 L1353.1 723.9" stroke="#dfe4ea" stroke-width="1.3"/><path d="M1135.9 752.5 L1169.5 735.6" stroke="#dfe4ea" stroke-width="1.3"/><path d="M1170.2 586.0 L1189.1 587.4" stroke="#dfe4ea" stroke-width="1.3"/><path d="M1100.6 681.5 L1108.1 695.5" stroke="#dfe4ea" stroke-width="1.3"/><path d="M1279.1 699.1 L1291.8 734.8" stroke="#dfe4ea" stroke-width="1.3"/><path d="M1289.9 708.7 L1302.1 711.7" stroke="#dfe4ea" stroke-width="1.3"/><path d="M1361.2 753.6 L1401.1 755.4" stroke="#dfe4ea" stroke-width="1.3"/><path d="M1113.3 776.6 L1143.1 789.9" stroke="#dfe4ea" stroke-width="1.3"/><path d="M1484.4 706.7 L1509.3 733.3" stroke="#dfe4ea" stroke-width="1.3"/><path d="M1264.4 864.6 L1286.5 884.1" stroke="#dfe4ea" stroke-width="1.3"/><path d="M1249.0 789.8 L1274.9 774.8" stroke="#dfe4ea" stroke-width="1.3"/><path d="M1401.9 719.8 L1429.4 742.2" stroke="#dfe4ea" stroke-width="1.3"/><path d="M1117.0 850.1 L1131.1 853.6" stroke="#dfe4ea" stroke-width="1.3"/><path d="M1089.9 924.7 L1116.7 913.3" stroke="#dfe4ea" stroke-width="1.3"/><path d="M1486.8 672.1 L1502.3 676.2" stroke="#dfe4ea" stroke-width="1.3"/><path d="M1350.4 766.6 L1351.0 791.0" stroke="#dfe4ea" stroke-width="1.3"/><path d="M1474.1 697.7 L1498.2 697.9" stroke="#dfe4ea" stroke-width="1.3"/><path d="M1469.1 718.4 L1471.6 734.0" stroke="#dfe4ea" stroke-width="1.3"/><path d="M1235.0 902.4 L1271.1 916.2" stroke="#dfe4ea" stroke-width="1.3"/><path d="M1202.3 640.9 L1231.6 665.1" stroke="#dfe4ea" stroke-width="1.3"/><path d="M1447.3 717.7 L1470.7 739.6" stroke="#dfe4ea" stroke-width="1.3"/><path d="M1221.6 878.3 L1234.5 881.1" stroke="#dfe4ea" stroke-width="1.3"/><path d="M1393.2 785.4 L1420.7 789.4" stroke="#dfe4ea" stroke-width="1.3"/><path d="M1363.3 725.9 L1367.8 690.9" stroke="#dfe4ea" stroke-width="1.3"/><path d="M1184.9 630.7 L1198.7 637.3" stroke="#dfe4ea" stroke-width="1.3"/><path d="M1128.2 772.7 L1126.1 803.8" stroke="#dfe4ea" stroke-width="1.3"/><path d="M1168.1 751.1 L1178.1 782.6" stroke="#dfe4ea" stroke-width="1.3"/><path d="M1316.4 593.0 L1320.8 571.8" stroke="#dfe4ea" stroke-width="1.3"/><path d="M1388.2 767.4 L1401.6 798.8" stroke="#dfe4ea" stroke-width="1.3"/><path d="M1480.6 611.4 L1495.7 591.9" stroke="#dfe4ea" stroke-width="1.3"/><path d="M1246.5 784.8 L1249.0 814.9" stroke="#dfe4ea" stroke-width="1.3"/><path d="M1170.6 839.9 L1203.5 822.5" stroke="#dfe4ea" stroke-width="1.3"/><path d="M1317.3 864.7 L1321.9 896.5" stroke="#dfe4ea" stroke-width="1.3"/><path d="M1086.9 761.7 L1113.2 769.3" stroke="#dfe4ea" stroke-width="1.3"/><path d="M1419.6 755.5 L1455.0 763.2" stroke="#dfe4ea" stroke-width="1.3"/><path d="M1269.6 592.6 L1270.1 630.3" stroke="#dfe4ea" stroke-width="1.3"/><path d="M1288.0 939.9 L1305.3 959.0" stroke="#dfe4ea" stroke-width="1.3"/><path d="M1499.5 611.0 L1506.4 584.2" stroke="#dfe4ea" stroke-width="1.3"/><path d="M1152.6 765.1 L1175.3 766.1" stroke="#dfe4ea" stroke-width="1.3"/><path d="M1172.0 886.3 L1189.5 888.4" stroke="#dfe4ea" stroke-width="1.3"/><path d="M1316.9 761.1 L1339.9 729.5" stroke="#dfe4ea" stroke-width="1.3"/><path d="M1308.1 724.2 L1336.9 711.9" stroke="#dfe4ea" stroke-width="1.3"/><path d="M1109.1 773.9 L1136.0 752.5" stroke="#dfe4ea" stroke-width="1.3"/><path d="M1258.6 668.7 L1278.7 682.1" stroke="#dfe4ea" stroke-width="1.3"/><path d="M1290.6 694.2 L1293.8 681.8" stroke="#dfe4ea" stroke-width="1.3"/><path d="M1195.0 832.8 L1211.2 835.4" stroke="#dfe4ea" stroke-width="1.3"/><path d="M1085.2 682.3 L1089.0 708.0" stroke="#dfe4ea" stroke-width="1.3"/><path d="M1300.9 789.6 L1332.1 794.8" stroke="#dfe4ea" stroke-width="1.3"/><path d="M1468.4 588.4 L1490.7 569.5" stroke="#dfe4ea" stroke-width="1.3"/><path d="M1316.0 658.6 L1326.7 631.5" stroke="#dfe4ea" stroke-width="1.3"/><path d="M1458.7 663.8 L1457.6 684.6" stroke="#dfe4ea" stroke-width="1.3"/><path d="M1219.2 912.2 L1225.3 895.8" stroke="#dfe4ea" stroke-width="1.3"/><path d="M1122.8 900.0 L1128.6 918.4" stroke="#dfe4ea" stroke-width="1.3"/><path d="M1122.9 879.6 L1145.3 857.1" stroke="#dfe4ea" stroke-width="1.3"/><path d="M1168.7 806.1 L1196.2 811.1" stroke="#dfe4ea" stroke-width="1.3"/><path d="M1238.1 875.6 L1242.9 901.3" stroke="#dfe4ea" stroke-width="1.3"/><path d="M1415.1 761.0 L1424.1 737.2" stroke="#dfe4ea" stroke-width="1.3"/><path d="M1090.7 854.3 L1105.0 863.9" stroke="#dfe4ea" stroke-width="1.3"/><path d="M1170.1 882.5 L1184.4 885.8" stroke="#dfe4ea" stroke-width="1.3"/><path d="M1107.4 922.5 L1119.7 930.5" stroke="#dfe4ea" stroke-width="1.3"/><path d="M1252.8 733.5 L1255.4 762.2" stroke="#dfe4ea" stroke-width="1.3"/><path d="M1085.9 832.4 L1090.2 808.0" stroke="#dfe4ea" stroke-width="1.3"/><path d="M1406.8 725.9 L1411.1 711.9" stroke="#dfe4ea" stroke-width="1.3"/><path d="M1430.2 696.5 L1460.4 686.9" stroke="#dfe4ea" stroke-width="1.3"/><path d="M1258.8 795.9 L1258.4 815.1" stroke="#dfe4ea" stroke-width="1.3"/><path d="M1259.3 902.8 L1259.0 936.2" stroke="#dfe4ea" stroke-width="1.3"/><path d="M1259.3 840.1 L1278.8 833.9" stroke="#dfe4ea" stroke-width="1.3"/><path d="M1124.6 899.7 L1162.1 908.1" stroke="#dfe4ea" stroke-width="1.3"/><path d="M1374.4 701.6 L1393.6 682.7" stroke="#dfe4ea" stroke-width="1.3"/><path d="M1252.2 940.0 L1263.0 908.4" stroke="#dfe4ea" stroke-width="1.3"/><path d="M1513.2 588.2 L1531.4 582.0" stroke="#dfe4ea" stroke-width="1.3"/><path d="M1257.5 598.2 L1261.3 586.5" stroke="#dfe4ea" stroke-width="1.3"/><path d="M1194.3 679.2 L1195.7 705.4" stroke="#dfe4ea" stroke-width="1.3"/><path d="M1437.8 607.4 L1474.7 617.5" stroke="#dfe4ea" stroke-width="1.3"/><path d="M1250.6 929.2 L1272.3 948.0" stroke="#dfe4ea" stroke-width="1.3"/><path d="M1269.9 758.0 L1298.4 761.1" stroke="#dfe4ea" stroke-width="1.3"/><path d="M1241.6 682.9 L1261.4 685.2" stroke="#dfe4ea" stroke-width="1.3"/><path d="M1396.7 686.6 L1423.1 697.2" stroke="#dfe4ea" stroke-width="1.3"/><path d="M1359.8 727.2 L1372.2 710.4" stroke="#dfe4ea" stroke-width="1.3"/><path d="M1255.8 789.4 L1263.2 826.0" stroke="#dfe4ea" stroke-width="1.3"/><path d="M1269.8 751.9 L1271.8 737.3" stroke="#dfe4ea" stroke-width="1.3"/><path d="M1143.8 925.6 L1148.3 911.0" stroke="#dfe4ea" stroke-width="1.3"/><path d="M1355.9 744.0 L1364.1 723.6" stroke="#dfe4ea" stroke-width="1.3"/><path d="M1148.4 710.8 L1156.2 734.3" stroke="#dfe4ea" stroke-width="1.3"/><path d="M1195.9 789.6 L1217.8 765.1" stroke="#dfe4ea" stroke-width="1.3"/><path d="M1440.3 629.3 L1458.7 632.5" stroke="#dfe4ea" stroke-width="1.3"/><path d="M1130.3 901.4 L1134.3 930.2" stroke="#dfe4ea" stroke-width="1.3"/><path d="M1164.0 680.3 L1167.3 661.6" stroke="#dfe4ea" stroke-width="1.3"/><path d="M1468.4 594.2 L1487.5 597.2" stroke="#dfe4ea" stroke-width="1.3"/><path d="M1091.9 593.7 L1095.8 580.2" stroke="#dfe4ea" stroke-width="1.3"/><path d="M1118.2 823.5 L1125.1 802.1" stroke="#dfe4ea" stroke-width="1.3"/><path d="M1291.5 655.8 L1292.7 671.5" stroke="#dfe4ea" stroke-width="1.3"/><path d="M1277.7 875.9 L1286.0 844.1" stroke="#dfe4ea" stroke-width="1.3"/><path d="M1252.4 634.2 L1265.1 671.9" stroke="#dfe4ea" stroke-width="1.3"/><path d="M1223.8 777.5 L1232.4 798.1" stroke="#dfe4ea" stroke-width="1.3"/><path d="M1122.9 895.1 L1145.2 886.0" stroke="#dfe4ea" stroke-width="1.3"/><path d="M1284.9 876.5 L1302.6 879.5" stroke="#dfe4ea" stroke-width="1.3"/><path d="M1372.6 609.4 L1405.9 612.7" stroke="#dfe4ea" stroke-width="1.3"/><path d="M1225.0 897.4 L1232.3 865.9" stroke="#dfe4ea" stroke-width="1.3"/><path d="M1241.9 622.3 L1270.3 647.2" stroke="#dfe4ea" stroke-width="1.3"/><path d="M1273.6 869.1 L1291.7 870.7" stroke="#dfe4ea" stroke-width="1.3"/><path d="M1308.1 610.3 L1314.7 640.6" stroke="#dfe4ea" stroke-width="1.3"/><path d="M1406.6 712.6 L1431.5 687.5" stroke="#dfe4ea" stroke-width="1.3"/><path d="M1328.7 643.6 L1342.4 658.0" stroke="#dfe4ea" stroke-width="1.3"/><path d="M1089.8 765.6 L1103.2 802.3" stroke="#dfe4ea" stroke-width="1.3"/><path d="M1108.3 776.9 L1126.0 768.3" stroke="#dfe4ea" stroke-width="1.3"/><path d="M1126.6 693.0 L1141.7 698.3" stroke="#dfe4ea" stroke-width="1.3"/><path d="M1188.5 659.4 L1188.3 682.4" stroke="#dfe4ea" stroke-width="1.3"/><path d="M1229.3 928.6 L1239.2 953.8" stroke="#dfe4ea" stroke-width="1.3"/><path d="M1484.4 727.8 L1483.2 762.4" stroke="#dfe4ea" stroke-width="1.3"/><path d="M1311.5 835.6 L1333.2 825.9" stroke="#dfe4ea" stroke-width="1.3"/><path d="M1144.6 846.8 L1160.0 832.6" stroke="#dfe4ea" stroke-width="1.3"/><path d="M1252.1 770.5 L1265.3 773.7" stroke="#dfe4ea" stroke-width="1.3"/><path d="M1216.3 621.3 L1221.2 637.7" stroke="#dfe4ea" stroke-width="1.3"/><path d="M1107.6 745.2 L1116.4 754.7" stroke="#dfe4ea" stroke-width="1.3"/><path d="M1128.0 646.4 L1136.5 618.9" stroke="#dfe4ea" stroke-width="1.3"/><path d="M968.7 941.0 L1000.7 935.0" stroke="#e1e6ec" stroke-width="1.1"/><path d="M959.3 989.3 L963.8 1015.3" stroke="#e1e6ec" stroke-width="1.1"/><path d="M1032.2 946.0 L1042.0 967.0" stroke="#e1e6ec" stroke-width="1.1"/><path d="M959.4 994.7 L985.3 1009.3" stroke="#e1e6ec" stroke-width="1.1"/><path d="M917.5 983.5 L933.6 978.1" stroke="#e1e6ec" stroke-width="1.1"/><path d="M923.1 975.8 L924.6 1006.0" stroke="#e1e6ec" stroke-width="1.1"/><path d="M1009.5 974.5 L1014.7 941.7" stroke="#e1e6ec" stroke-width="1.1"/><path d="M1025.4 984.9 L1031.5 1006.4" stroke="#e1e6ec" stroke-width="1.1"/><path d="M938.3 930.6 L946.1 950.7" stroke="#e1e6ec" stroke-width="1.1"/><path d="M1009.2 897.4 L1017.2 926.9" stroke="#e1e6ec" stroke-width="1.1"/><path d="M922.7 969.0 L944.8 977.9" stroke="#e1e6ec" stroke-width="1.1"/><path d="M912.1 948.6 L920.8 934.3" stroke="#e1e6ec" stroke-width="1.1"/><path d="M1028.7 897.9 L1036.2 879.2" stroke="#e1e6ec" stroke-width="1.1"/><path d="M988.0 943.4 L996.9 969.9" stroke="#e1e6ec" stroke-width="1.1"/><path d="M916.2 969.8 L939.6 973.1" stroke="#e1e6ec" stroke-width="1.1"/><path d="M907.6 902.5 L922.9 879.5" stroke="#e1e6ec" stroke-width="1.1"/><path d="M1010.5 932.8 L1012.4 911.4" stroke="#e1e6ec" stroke-width="1.1"/><path d="M971.7 993.6 L973.4 1012.8" stroke="#e1e6ec" stroke-width="1.1"/><path d="M959.7 946.8 L959.2 974.1" stroke="#e1e6ec" stroke-width="1.1"/><path d="M914.1 888.9 L925.2 863.9" stroke="#e1e6ec" stroke-width="1.1"/><path d="M996.2 969.6 L1005.3 981.3" stroke="#e1e6ec" stroke-width="1.1"/><path d="M965.1 983.6 L983.0 998.0" stroke="#e1e6ec" stroke-width="1.1"/><path d="M944.6 893.6 L965.1 917.8" stroke="#e1e6ec" stroke-width="1.1"/><path d="M1019.0 966.3 L1023.4 981.2" stroke="#e1e6ec" stroke-width="1.1"/><path d="M989.7 992.5 L1013.4 1016.8" stroke="#e1e6ec" stroke-width="1.1"/><path d="M1006.9 946.7 L1010.9 930.8" stroke="#e1e6ec" stroke-width="1.1"/><path d="M955.8 893.2 L970.8 882.7" stroke="#e1e6ec" stroke-width="1.1"/><path d="M968.4 956.8 L988.9 953.3" stroke="#e1e6ec" stroke-width="1.1"/><path d="M918.8 954.6 L928.9 930.1" stroke="#e1e6ec" stroke-width="1.1"/><path d="M929.2 903.2 L931.2 880.6" stroke="#e1e6ec" stroke-width="1.1"/><path d="M1000.0 892.1 L1002.6 857.4" stroke="#e1e6ec" stroke-width="1.1"/><path d="M963.6 972.5 L990.6 957.5" stroke="#e1e6ec" stroke-width="1.1"/><path d="M1030.1 896.7 L1039.2 884.2" stroke="#e1e6ec" stroke-width="1.1"/><path d="M998.3 937.9 L1004.1 963.6" stroke="#e1e6ec" stroke-width="1.1"/><path d="M1003.1 953.6 L1028.3 937.0" stroke="#e1e6ec" stroke-width="1.1"/><path d="M938.1 998.3 L956.0 1000.0" stroke="#e1e6ec" stroke-width="1.1"/><path d="M930.5 916.8 L954.9 912.2" stroke="#e1e6ec" stroke-width="1.1"/><path d="M932.7 919.9 L944.0 911.1" stroke="#e1e6ec" stroke-width="1.1"/><path d="M1001.3 910.5 L1020.0 912.8" stroke="#e1e6ec" stroke-width="1.1"/><path d="M936.6 953.4 L961.8 954.5" stroke="#e1e6ec" stroke-width="1.1"/><path d="M931.8 992.0 L931.1 1020.3" stroke="#e1e6ec" stroke-width="1.1"/><path d="M1031.3 948.1 L1032.9 921.0" stroke="#e1e6ec" stroke-width="1.1"/><path d="M1009.8 896.4 L1031.4 894.8" stroke="#e1e6ec" stroke-width="1.1"/><path d="M950.0 891.0 L956.7 907.8" stroke="#e1e6ec" stroke-width="1.1"/><path d="M1024.2 934.3 L1037.2 946.0" stroke="#e1e6ec" stroke-width="1.1"/><path d="M993.2 764.7 L999.8 727.4" stroke="#d6e6df" stroke-width="1.2"/><path d="M931.1 806.6 L938.0 828.9" stroke="#d6e6df" stroke-width="1.2"/><path d="M927.6 846.1 L927.0 814.0" stroke="#d6e6df" stroke-width="1.2"/><path d="M961.4 809.2 L978.7 801.1" stroke="#d6e6df" stroke-width="1.2"/><path d="M997.6 820.4 L1022.4 816.7" stroke="#d6e6df" stroke-width="1.2"/><path d="M1026.3 845.3 L1025.8 863.7" stroke="#d6e6df" stroke-width="1.2"/><path d="M1022.2 827.9 L1030.3 857.2" stroke="#d6e6df" stroke-width="1.2"/><path d="M1004.3 810.3 L1015.9 787.8" stroke="#d6e6df" stroke-width="1.2"/><path d="M910.1 760.9 L918.7 737.2" stroke="#d6e6df" stroke-width="1.2"/><path d="M957.1 677.6 L983.3 649.6" stroke="#d6e6df" stroke-width="1.2"/><path d="M913.3 814.6 L939.6 837.2" stroke="#d6e6df" stroke-width="1.2"/><path d="M967.5 754.5 L974.5 731.9" stroke="#d6e6df" stroke-width="1.2"/><path d="M1044.0 841.7 L1068.6 846.9" stroke="#d6e6df" stroke-width="1.2"/><path d="M948.6 836.7 L986.0 832.3" stroke="#d6e6df" stroke-width="1.2"/><path d="M1012.0 823.3 L1018.1 806.5" stroke="#d6e6df" stroke-width="1.2"/><path d="M1050.5 719.4 L1076.0 721.1" stroke="#d6e6df" stroke-width="1.2"/><path d="M908.8 840.5 L932.9 822.1" stroke="#d6e6df" stroke-width="1.2"/><path d="M972.1 729.1 L1001.4 710.3" stroke="#d6e6df" stroke-width="1.2"/><path d="M1041.8 834.2 L1066.5 807.8" stroke="#d6e6df" stroke-width="1.2"/><path d="M942.6 833.3 L944.1 860.2" stroke="#d6e6df" stroke-width="1.2"/><path d="M921.3 841.1 L952.4 845.6" stroke="#d6e6df" stroke-width="1.2"/><path d="M1050.7 834.7 L1049.8 868.0" stroke="#d6e6df" stroke-width="1.2"/><path d="M1040.1 727.4 L1068.9 731.7" stroke="#d6e6df" stroke-width="1.2"/><path d="M930.4 786.4 L947.9 781.9" stroke="#d6e6df" stroke-width="1.2"/><path d="M916.1 759.1 L930.1 724.8" stroke="#d6e6df" stroke-width="1.2"/><path d="M1143 611 L1184 604 L1224 598 L1300 587 L1366 601 L1412 593 L1442 587 L1522 587" fill="none" stroke="#d3dbe5" stroke-width="3.3" stroke-linejoin="round" stroke-linecap="round"/><path d="M1149 615 L1170 650 L1190 682 L1207 708 L1225 740 L1233 778" fill="none" stroke="#d3dbe5" stroke-width="3.3" stroke-linejoin="round" stroke-linecap="round"/><path d="M1101 670 L1181 679 L1260 676 L1300 672" fill="none" stroke="#d3dbe5" stroke-width="3.3" stroke-linejoin="round" stroke-linecap="round"/><path d="M1123 689 L1167 699 L1210 712 L1260 722 L1300 735" fill="none" stroke="#d3dbe5" stroke-width="3.3" stroke-linejoin="round" stroke-linecap="round"/><path d="M1135 708 L1157 689 L1196 672" fill="none" stroke="#d3dbe5" stroke-width="3.3" stroke-linejoin="round" stroke-linecap="round"/><path d="M1238 580 L1246 650 L1252 700 L1259 720" fill="none" stroke="#d3dbe5" stroke-width="3.3" stroke-linejoin="round" stroke-linecap="round"/><path d="M1282 580 L1300 629" fill="none" stroke="#d3dbe5" stroke-width="3.3" stroke-linejoin="round" stroke-linecap="round"/><path d="M1290 639 L1359 643 L1371 659 L1381 692 L1389 712 L1374 740 L1368 780" fill="none" stroke="#d3dbe5" stroke-width="3.3" stroke-linejoin="round" stroke-linecap="round"/><path d="M1348 583 L1334 639 L1328 740 L1322 800 L1320 900" fill="none" stroke="#d3dbe5" stroke-width="3.3" stroke-linejoin="round" stroke-linecap="round"/><path d="M1305 639 L1313 700 L1314 740" fill="none" stroke="#d3dbe5" stroke-width="3.3" stroke-linejoin="round" stroke-linecap="round"/><path d="M1436 600 L1433 662 L1436 740" fill="none" stroke="#d3dbe5" stroke-width="3.3" stroke-linejoin="round" stroke-linecap="round"/><path d="M1446 643 L1461 670 L1465 740" fill="none" stroke="#d3dbe5" stroke-width="3.3" stroke-linejoin="round" stroke-linecap="round"/><path d="M1232 778 L1193 822 L1161 865 L1135 900 L1123 909 L1116 952" fill="none" stroke="#d3dbe5" stroke-width="3.3" stroke-linejoin="round" stroke-linecap="round"/><path d="M1178 833 L1196 820 L1214 810 L1225 778" fill="none" stroke="#d3dbe5" stroke-width="3.3" stroke-linejoin="round" stroke-linecap="round"/><path d="M1196 820 L1239 836 L1297 865" fill="none" stroke="#d3dbe5" stroke-width="3.3" stroke-linejoin="round" stroke-linecap="round"/><path d="M1233 735 L1233 778 L1261 822 L1290 865" fill="none" stroke="#d3dbe5" stroke-width="3.3" stroke-linejoin="round" stroke-linecap="round"/><path d="M1152 735 L1167 764 L1196 815" fill="none" stroke="#d3dbe5" stroke-width="3.3" stroke-linejoin="round" stroke-linecap="round"/><path d="M1080 822 L1155 815 L1193 822" fill="none" stroke="#d3dbe5" stroke-width="3.3" stroke-linejoin="round" stroke-linecap="round"/><path d="M1094 836 L1080 865" fill="none" stroke="#d3dbe5" stroke-width="3.3" stroke-linejoin="round" stroke-linecap="round"/><path d="M1157 871 L1203 880 L1254 900" fill="none" stroke="#d3dbe5" stroke-width="3.3" stroke-linejoin="round" stroke-linecap="round"/><path d="M1181 880 L1217 894 L1254 894 L1300 889 L1360 885" fill="none" stroke="#d3dbe5" stroke-width="3.3" stroke-linejoin="round" stroke-linecap="round"/><path d="M1403 778 L1409 796 L1427 811 L1442 825" fill="none" stroke="#d3dbe5" stroke-width="3.3" stroke-linejoin="round" stroke-linecap="round"/><path d="M1320 790 L1380 850 L1395 880" fill="none" stroke="#d3dbe5" stroke-width="3.3" stroke-linejoin="round" stroke-linecap="round"/><path d="M1088 740 L1150 745 L1181 742" fill="none" stroke="#d3dbe5" stroke-width="3.3" stroke-linejoin="round" stroke-linecap="round"/><path d="M960 580 L975 600" fill="none" stroke="#d3dbe5" stroke-width="3.3" stroke-linejoin="round" stroke-linecap="round"/><path d="M1000 580 L1020 610 L1045 630" fill="none" stroke="#d3dbe5" stroke-width="3.3" stroke-linejoin="round" stroke-linecap="round"/><path d="M903 720 L940 735 L985 765 L1025 790" fill="none" stroke="#d3dbe5" stroke-width="3.3" stroke-linejoin="round" stroke-linecap="round"/><path d="M1060 1007 L1075 980" fill="none" stroke="#d3dbe5" stroke-width="3.3" stroke-linejoin="round" stroke-linecap="round"/><path d="M1090 930 L1066 929 L1050 924" fill="none" stroke="#d3dbe5" stroke-width="3.3" stroke-linejoin="round" stroke-linecap="round"/><path d="M1522 723 L1514 735 L1511 758 L1485 785 L1458 811 L1442 830 L1420 857 L1397 883 L1374 900 L1337 926 L1300 933 L1254 945 L1232 938 L1196 946 L1171 958 L1155 964 L1138 961 L1087 971 L1062 981 L1050 1007 L1543 1007 L1543 723Z" fill="#8fd7ef"/><path d="M1087 983 L1184 966 L1149 974 L1140 984 L1080 998Z" fill="#f4f4f5"/><path d="M1222 945 L1240 1007 M1330 935 L1318 1007 M1222 950 L1522 1007" stroke="#6cc0e4" stroke-width="0.8" stroke-dasharray="3 3" fill="none"/><path d="M903 655 L933 621 L959 613 L974 604 L986 580" fill="none" stroke="#9db2d2" stroke-width="5" stroke-linejoin="round" stroke-linecap="round"/><path d="M904 653 L933 634 L955 632 C980 623 1000 619 1028 626 S1068 651 1100 687" fill="none" stroke="#9db2d2" stroke-width="6" stroke-linejoin="round" stroke-linecap="round"/><path d="M1114 580 L1135 614 L1132 633 L1116 645 L1099 659 L1093 679 L1099 694 L1110 708 L1112 720 L1104 740 L1092 757 L1080 778 L1074 800 L1068 830 L1062 860 L1057 897 L1050 925 L1042 960 L1045 1007" fill="none" stroke="#9db2d2" stroke-width="5" stroke-linejoin="round" stroke-linecap="round"/><path d="M903 806 L960 786 L1000 778 L1040 776 L1090 794" fill="none" stroke="#9db2d2" stroke-width="4.5" stroke-linejoin="round" stroke-linecap="round"/><path d="M1080 797 L1123 791 L1181 783 L1226 778" fill="none" stroke="#9db2d2" stroke-width="5" stroke-linejoin="round" stroke-linecap="round"/><path d="M956 1007 L1012 996 L1044 985 L1062 972 L1090 956 L1094 954 L1145 954 L1167 947 L1188 934 L1217 931 L1300 931 L1337 924 L1363 900 L1384 887 L1409 865 L1435 830 L1450 808 L1473 773 L1500 750 L1508 735 L1514 700 L1522 690" fill="none" stroke="#9db2d2" stroke-width="4.5" stroke-linejoin="round" stroke-linecap="round"/><path d="M1511 580 L1514 601 L1522 616" fill="none" stroke="#9db2d2" stroke-width="4.5" stroke-linejoin="round" stroke-linecap="round"/><text x="971" y="600" font-size="10.8" font-weight="400" fill="#4e5f78" text-anchor="middle" letter-spacing="0" font-family="Liberation Sans" stroke="#fff" stroke-width="2.5" paint-order="stroke" stroke-linejoin="round" transform="rotate(-52 971 600)">2ª Circular</text><text x="955.00 961.93 967.17 970.11 973.06 981.40 987.43 993.51 996.56 999.62 1007.56 1013.64 1017.27 1020.88 1026.85 1029.22 1035.07 1037.93 1044.57 1049.82 1052.83 1055.75 1060.41 1062.66" y="637.00 634.60 632.94 632.08 631.28 629.36 628.37 627.72 627.54 627.44 627.67 628.27 628.79 629.43 630.73 631.33 633.13 634.21 637.32 640.44 642.53 644.75 648.71 650.78" rotate="-19.1 -17.9 -16.4 -15.6 -12.7 -9.3 -5.5 -4.1 -1.3 1.5 5.7 8.4 9.7 12.3 15.0 17.0 21.3 25.8 30.2 34.3 38.1 39.7 42.6 44.9" font-size="11" fill="#4e5f78" font-family="Liberation Sans" stroke="#fff" stroke-width="2.2" paint-order="stroke" stroke-linejoin="round">Av. Gen. Correia Barreto</text><text x="903" y="692" font-size="10.5" font-weight="700" fill="#444" text-anchor="start" letter-spacing="1.2" font-family="Liberation Sans" stroke="#fff" stroke-width="2.5" paint-order="stroke" stroke-linejoin="round" >IRRO DE</text><text x="903" y="703" font-size="10.5" font-weight="700" fill="#444" text-anchor="start" letter-spacing="1.2" font-family="Liberation Sans" stroke="#fff" stroke-width="2.5" paint-order="stroke" stroke-linejoin="round" >AVISTA</text><text x="1213" y="756" font-size="15" font-weight="400" fill="#3b8f66" text-anchor="middle" letter-spacing="0" font-family="Liberation Sans" stroke="#fff" stroke-width="2.5" paint-order="stroke" stroke-linejoin="round" >Parque</text><text x="1213" y="772" font-size="15" font-weight="400" fill="#3b8f66" text-anchor="middle" letter-spacing="0" font-family="Liberation Sans" stroke="#fff" stroke-width="2.5" paint-order="stroke" stroke-linejoin="round" >Eduardo VII</text><text x="967" y="787" font-size="15" font-weight="400" fill="#3b8f66" text-anchor="middle" letter-spacing="0" font-family="Liberation Sans" stroke="#fff" stroke-width="2.5" paint-order="stroke" stroke-linejoin="round" >Parque</text><text x="967" y="802" font-size="15" font-weight="400" fill="#3b8f66" text-anchor="middle" letter-spacing="0" font-family="Liberation Sans" stroke="#fff" stroke-width="2.5" paint-order="stroke" stroke-linejoin="round" >Florestal de</text><text x="967" y="817" font-size="15" font-weight="400" fill="#3b8f66" text-anchor="middle" letter-spacing="0" font-family="Liberation Sans" stroke="#fff" stroke-width="2.5" paint-order="stroke" stroke-linejoin="round" >Monsanto</text><text x="1121" y="809" font-size="10.5" font-weight="700" fill="#444" text-anchor="middle" letter-spacing="1.2" font-family="Liberation Sans" stroke="#fff" stroke-width="2.5" paint-order="stroke" stroke-linejoin="round" >CAMPO DE</text><text x="1121" y="821" font-size="10.5" font-weight="700" fill="#444" text-anchor="middle" letter-spacing="1.2" font-family="Liberation Sans" stroke="#fff" stroke-width="2.5" paint-order="stroke" stroke-linejoin="round" >OURIQUE</text><text x="1296" y="813.4" font-size="25.5" fill="#222" text-anchor="middle" letter-spacing="1.3" font-family="Liberation Sans" stroke="#fff" stroke-width="2.5" paint-order="stroke" stroke-linejoin="round">Lisbon</text><text x="1296" y="813.4" font-size="25.5" fill="#222" text-anchor="middle" letter-spacing="1.3" font-family="Liberation Sans" stroke="#222" stroke-width="0.5">Lisbon</text><text x="1253" y="862" font-size="15" font-weight="400" fill="#9f5fe4" text-anchor="middle" letter-spacing="0" font-family="Liberation Sans" stroke="#fff" stroke-width="2.5" paint-order="stroke" stroke-linejoin="round" >Castelo de S. Jorge</text><text x="1260" y="885" font-size="10.5" font-weight="700" fill="#444" text-anchor="middle" letter-spacing="1.2" font-family="Liberation Sans" stroke="#fff" stroke-width="2.5" paint-order="stroke" stroke-linejoin="round" >BAIRRO ALTO</text><text x="1279" y="903" font-size="10.5" font-weight="700" fill="#444" text-anchor="middle" letter-spacing="1.2" font-family="Liberation Sans" stroke="#fff" stroke-width="2.5" paint-order="stroke" stroke-linejoin="round" >CHIADO</text><text x="1356" y="888" font-size="10.5" font-weight="700" fill="#444" text-anchor="middle" letter-spacing="1.2" font-family="Liberation Sans" stroke="#fff" stroke-width="2.5" paint-order="stroke" stroke-linejoin="round" >ALFAMA</text><text x="1270" y="935" font-size="10.5" font-weight="700" fill="#444" text-anchor="middle" letter-spacing="1.2" font-family="Liberation Sans" stroke="#fff" stroke-width="2.5" paint-order="stroke" stroke-linejoin="round" >CAIS DO SODRE</text><text x="998" y="947" font-size="15" font-weight="400" fill="#9f5fe4" text-anchor="middle" letter-spacing="0" font-family="Liberation Sans" stroke="#fff" stroke-width="2.5" paint-order="stroke" stroke-linejoin="round" >LxFactory</text><text x="1278" y="662" font-size="15" font-weight="400" fill="#9f5fe4" text-anchor="middle" letter-spacing="0" font-family="Liberation Sans" stroke="#fff" stroke-width="2.5" paint-order="stroke" stroke-linejoin="round" >Museu Calouste</text><text x="1264" y="677" font-size="15" font-weight="400" fill="#9f5fe4" text-anchor="middle" letter-spacing="0" font-family="Liberation Sans" stroke="#fff" stroke-width="2.5" paint-order="stroke" stroke-linejoin="round" >Gulbenkian</text><text x="1388" y="765" font-size="15" font-weight="400" fill="#9f5fe4" text-anchor="middle" letter-spacing="0" font-family="Liberation Sans" stroke="#fff" stroke-width="2.5" paint-order="stroke" stroke-linejoin="round" >Museu Nacional</text><text x="1414" y="780" font-size="15" font-weight="400" fill="#9f5fe4" text-anchor="middle" letter-spacing="0" font-family="Liberation Sans" stroke="#fff" stroke-width="2.5" paint-order="stroke" stroke-linejoin="round" >do Azulejo</text><text x="1347" y="621" font-size="14.6" font-weight="400" fill="#d9573a" text-anchor="start" letter-spacing="0.25" font-family="Liberation Sans" stroke="#fff" stroke-width="2.5" paint-order="stroke" stroke-linejoin="round" >Fábrica de Braço de Prata</text><text x="1407" y="676" font-size="10.5" font-weight="700" fill="#444" text-anchor="middle" letter-spacing="1.2" font-family="Liberation Sans" stroke="#fff" stroke-width="2.5" paint-order="stroke" stroke-linejoin="round" >OLAIAS</text><text x="1442" y="694" font-size="10.5" font-weight="700" fill="#444" text-anchor="middle" letter-spacing="1.2" font-family="Liberation Sans" stroke="#fff" stroke-width="2.5" paint-order="stroke" stroke-linejoin="round" >MADRE DEUS</text><text x="1262" y="962" font-size="9.5" fill="#3f7fcf" font-family="Liberation Sans" transform="rotate(62 1262 962)">Cais do Sodré</text><rect x="1116" y="630" width="21" height="12" rx="1" fill="#3e7fd3"/><text x="1126.5" y="639.7" font-size="9" font-weight="700" fill="#fff" text-anchor="middle" font-family="Liberation Sans">IP7</text><rect x="1053" y="799" width="20" height="12" rx="1" fill="#3e7fd3"/><text x="1063.0" y="808.7" font-size="9" font-weight="700" fill="#fff" text-anchor="middle" font-family="Liberation Sans">IP7</text><rect x="1046" y="874" width="18" height="12" rx="1" fill="#3e7fd3"/><text x="1055.0" y="883.7" font-size="9" font-weight="700" fill="#fff" text-anchor="middle" font-family="Liberation Sans">A2</text><rect x="1163" y="937" width="19" height="11" fill="#fff" stroke="#555" stroke-width="0.8"/><text x="1172.5" y="945.7" font-size="9" fill="#333" text-anchor="middle" font-family="Liberation Sans">N6</text><rect x="993" y="994" width="19" height="11" fill="#fff" stroke="#555" stroke-width="0.8"/><text x="1002.5" y="1002.7" font-size="9" fill="#333" text-anchor="middle" font-family="Liberation Sans">N6</text><rect x="909.2" y="618.2" width="15.6" height="15.6" rx="6" fill="#000" opacity="0.12"/><rect x="909.5" y="617.5" width="15" height="15" rx="5.5" fill="#4b6385" stroke="#fff" stroke-width="1.3"/><rect x="913.4" y="620.4" width="7.2" height="8" rx="1.8" fill="#fff"/><rect x="914.5" y="621.6" width="5" height="2.8" fill="#4b6385"/><circle cx="915.3" cy="626.3" r="0.9" fill="#4b6385"/><circle cx="918.7" cy="626.3" r="0.9" fill="#4b6385"/><path d="M914 630.5 L915.5 628.4 M920 630.5 L918.5 628.4" stroke="#fff" stroke-width="1"/><rect x="1116.2" y="652.2" width="15.6" height="15.6" rx="6" fill="#000" opacity="0.12"/><rect x="1116.5" y="651.5" width="15" height="15" rx="5.5" fill="#4b6385" stroke="#fff" stroke-width="1.3"/><rect x="1120.4" y="654.4" width="7.2" height="8" rx="1.8" fill="#fff"/><rect x="1121.5" y="655.6" width="5" height="2.8" fill="#4b6385"/><circle cx="1122.3" cy="660.3" r="0.9" fill="#4b6385"/><circle cx="1125.7" cy="660.3" r="0.9" fill="#4b6385"/><path d="M1121 664.5 L1122.5 662.4 M1127 664.5 L1125.5 662.4" stroke="#fff" stroke-width="1"/><rect x="1108.2" y="714.2" width="15.6" height="15.6" rx="6" fill="#000" opacity="0.12"/><rect x="1108.5" y="713.5" width="15" height="15" rx="5.5" fill="#4b6385" stroke="#fff" stroke-width="1.3"/><rect x="1112.4" y="716.4" width="7.2" height="8" rx="1.8" fill="#fff"/><rect x="1113.5" y="717.6" width="5" height="2.8" fill="#4b6385"/><circle cx="1114.3" cy="722.3" r="0.9" fill="#4b6385"/><circle cx="1117.7" cy="722.3" r="0.9" fill="#4b6385"/><path d="M1113 726.5 L1114.5 724.4 M1119 726.5 L1117.5 724.4" stroke="#fff" stroke-width="1"/><rect x="1229.2" y="617.2" width="15.6" height="15.6" rx="6" fill="#000" opacity="0.12"/><rect x="1229.5" y="616.5" width="15" height="15" rx="5.5" fill="#4b6385" stroke="#fff" stroke-width="1.3"/><rect x="1233.4" y="619.4" width="7.2" height="8" rx="1.8" fill="#fff"/><rect x="1234.5" y="620.6" width="5" height="2.8" fill="#4b6385"/><circle cx="1235.3" cy="625.3" r="0.9" fill="#4b6385"/><circle cx="1238.7" cy="625.3" r="0.9" fill="#4b6385"/><path d="M1234 629.5 L1235.5 627.4 M1240 629.5 L1238.5 627.4" stroke="#fff" stroke-width="1"/><rect x="1311.2" y="608.2" width="15.6" height="15.6" rx="6" fill="#000" opacity="0.12"/><rect x="1311.5" y="607.5" width="15" height="15" rx="5.5" fill="#4b6385" stroke="#fff" stroke-width="1.3"/><rect x="1315.4" y="610.4" width="7.2" height="8" rx="1.8" fill="#fff"/><rect x="1316.5" y="611.6" width="5" height="2.8" fill="#4b6385"/><circle cx="1317.3" cy="616.3" r="0.9" fill="#4b6385"/><circle cx="1320.7" cy="616.3" r="0.9" fill="#4b6385"/><path d="M1316 620.5 L1317.5 618.4 M1322 620.5 L1320.5 618.4" stroke="#fff" stroke-width="1"/><rect x="1481.2" y="660.2" width="15.6" height="15.6" rx="6" fill="#000" opacity="0.12"/><rect x="1481.5" y="659.5" width="15" height="15" rx="5.5" fill="#4b6385" stroke="#fff" stroke-width="1.3"/><rect x="1485.4" y="662.4" width="7.2" height="8" rx="1.8" fill="#fff"/><rect x="1486.5" y="663.6" width="5" height="2.8" fill="#4b6385"/><circle cx="1487.3" cy="668.3" r="0.9" fill="#4b6385"/><circle cx="1490.7" cy="668.3" r="0.9" fill="#4b6385"/><path d="M1486 672.5 L1487.5 670.4 M1492 672.5 L1490.5 670.4" stroke="#fff" stroke-width="1"/><rect x="1073.2" y="915.2" width="15.6" height="15.6" rx="6" fill="#000" opacity="0.12"/><rect x="1073.5" y="914.5" width="15" height="15" rx="5.5" fill="#4b6385" stroke="#fff" stroke-width="1.3"/><rect x="1077.4" y="917.4" width="7.2" height="8" rx="1.8" fill="#fff"/><rect x="1078.5" y="918.6" width="5" height="2.8" fill="#4b6385"/><circle cx="1079.3" cy="923.3" r="0.9" fill="#4b6385"/><circle cx="1082.7" cy="923.3" r="0.9" fill="#4b6385"/><path d="M1078 927.5 L1079.5 925.4 M1084 927.5 L1082.5 925.4" stroke="#fff" stroke-width="1"/><rect x="1068.2" y="957.2" width="15.6" height="15.6" rx="6" fill="#000" opacity="0.12"/><rect x="1068.5" y="956.5" width="15" height="15" rx="5.5" fill="#4b6385" stroke="#fff" stroke-width="1.3"/><rect x="1072.4" y="959.4" width="7.2" height="8" rx="1.8" fill="#fff"/><rect x="1073.5" y="960.6" width="5" height="2.8" fill="#4b6385"/><circle cx="1074.3" cy="965.3" r="0.9" fill="#4b6385"/><circle cx="1077.7" cy="965.3" r="0.9" fill="#4b6385"/><path d="M1073 969.5 L1074.5 967.4 M1079 969.5 L1077.5 967.4" stroke="#fff" stroke-width="1"/><rect x="1188.2" y="926.2" width="15.6" height="15.6" rx="6" fill="#000" opacity="0.12"/><rect x="1188.5" y="925.5" width="15" height="15" rx="5.5" fill="#4b6385" stroke="#fff" stroke-width="1.3"/><rect x="1192.4" y="928.4" width="7.2" height="8" rx="1.8" fill="#fff"/><rect x="1193.5" y="929.6" width="5" height="2.8" fill="#4b6385"/><circle cx="1194.3" cy="934.3" r="0.9" fill="#4b6385"/><circle cx="1197.7" cy="934.3" r="0.9" fill="#4b6385"/><path d="M1193 938.5 L1194.5 936.4 M1199 938.5 L1197.5 936.4" stroke="#fff" stroke-width="1"/><rect x="1395.2" y="860.2" width="15.6" height="15.6" rx="6" fill="#000" opacity="0.12"/><rect x="1395.5" y="859.5" width="15" height="15" rx="5.5" fill="#4b6385" stroke="#fff" stroke-width="1.3"/><rect x="1399.4" y="862.4" width="7.2" height="8" rx="1.8" fill="#fff"/><rect x="1400.5" y="863.6" width="5" height="2.8" fill="#4b6385"/><circle cx="1401.3" cy="868.3" r="0.9" fill="#4b6385"/><circle cx="1404.7" cy="868.3" r="0.9" fill="#4b6385"/><path d="M1400 872.5 L1401.5 870.4 M1406 872.5 L1404.5 870.4" stroke="#fff" stroke-width="1"/><path d="M1202 672 L1207 678 L1212 672Z" fill="#fff"/><circle cx="1207" cy="663" r="12" fill="#fff"/><circle cx="1207" cy="663" r="10.5" fill="#a66ff0"/><path d="M1201 661 L1207 657 L1213 661Z M1202 667 H1212 V669 H1202Z" fill="#fff"/><rect x="1202.5" y="661.5" width="9" height="5.5" fill="#fff"/><rect x="1204.2" y="662.5" width="1.3" height="3.5" fill="#a66ff0"/><rect x="1208.5" y="662.5" width="1.3" height="3.5" fill="#a66ff0"/><path d="M1454 775 L1459 781 L1464 775Z" fill="#fff"/><circle cx="1459" cy="766" r="12" fill="#fff"/><circle cx="1459" cy="766" r="10.5" fill="#a66ff0"/><path d="M1453 764 L1459 760 L1465 764Z M1454 770 H1464 V772 H1454Z" fill="#fff"/><rect x="1454.5" y="764.5" width="9" height="5.5" fill="#fff"/><rect x="1456.2" y="765.5" width="1.3" height="3.5" fill="#a66ff0"/><rect x="1460.5" y="765.5" width="1.3" height="3.5" fill="#a66ff0"/><path d="M1328 864 L1333 870 L1338 864Z" fill="#fff"/><circle cx="1333" cy="855" r="12" fill="#fff"/><circle cx="1333" cy="855" r="10.5" fill="#a66ff0"/><path d="M1328 861 V850 H1330 V852 H1332 V850 H1334 V852 H1336 V850 H1338 V861Z" fill="#fff"/><path d="M1041 949 L1046 955 L1051 949Z" fill="#fff"/><circle cx="1046" cy="940" r="12" fill="#fff"/><circle cx="1046" cy="940" r="10.5" fill="#a66ff0"/><circle cx="1046" cy="940" r="6" fill="#fff"/><circle cx="1044" cy="938" r="1.3" fill="#a66ff0"/><circle cx="1048" cy="939" r="1.3" fill="#a66ff0"/><circle cx="1045" cy="942.5" r="1.3" fill="#a66ff0"/><path d="M1262 702.3 C1259.5 693.3 1248.4 687.4 1248.4 676.4 A13.6 13.6 0 1 1 1275.6 676.4 C1275.6 687.4 1264.5 693.3 1262 702.3Z" fill="#ea4335" stroke="#c5221f" stroke-width="0.6"/><circle cx="1262" cy="676.4" r="5" fill="#a50e0e"/><path d="M1260 718.2 C1257.5 709.2 1246.4 703.3000000000001 1246.4 692.3000000000001 A13.6 13.6 0 1 1 1273.6 692.3000000000001 C1273.6 703.3000000000001 1262.5 709.2 1260 718.2Z" fill="#ea4335" stroke="#c5221f" stroke-width="0.6"/><circle cx="1260" cy="692.3000000000001" r="5" fill="#a50e0e"/><path d="M1179 834.1 C1176.5 825.1 1165.4 819.2 1165.4 808.2 A13.6 13.6 0 1 1 1192.6 808.2 C1192.6 819.2 1181.5 825.1 1179 834.1Z" fill="#ea4335" stroke="#c5221f" stroke-width="0.6"/><circle cx="1179" cy="808.2" r="5" fill="#a50e0e"/><path d="M1391 833.9 C1388.5 824.9 1377.4 819.0 1377.4 808.0 A13.6 13.6 0 1 1 1404.6 808.0 C1404.6 819.0 1393.5 824.9 1391 833.9Z" fill="#ea4335" stroke="#c5221f" stroke-width="0.6"/><circle cx="1391" cy="808.0" r="5" fill="#a50e0e"/><path d="M1324 899.2 C1321.5 890.2 1310.4 884.3000000000001 1310.4 873.3000000000001 A13.6 13.6 0 1 1 1337.6 873.3000000000001 C1337.6 884.3000000000001 1326.5 890.2 1324 899.2Z" fill="#ea4335" stroke="#c5221f" stroke-width="0.6"/><circle cx="1324" cy="873.3000000000001" r="5" fill="#a50e0e"/></svg></div>
<div class="a" style="left:1015px;top:1073.5px;width:600px;height:1px;background:#333;"></div>
<div class="a" style="left:903px;top:1072.5px;width:112.5px;height:3px;background:#6d9ce9;border-radius:2px;"></div>
<div class="t " style="left:917.30px;top:1042.44px;font-size:17.2px;color:#7aa6ee;font-weight:400;-webkit-text-stroke:0.2px #7aa6ee;">Coworking</div>
<div class="t " style="left:1035.00px;top:1042.44px;font-size:17.2px;color:#a8a8a8;font-weight:400;-webkit-text-stroke:0.2px #a8a8a8;">Café</div>
<div class="t " style="left:1106.60px;top:1042.44px;font-size:17.2px;color:#a8a8a8;font-weight:400;-webkit-text-stroke:0.2px #a8a8a8;">Gym</div>
<div class="t " style="left:1178.30px;top:1042.44px;font-size:17.2px;color:#a8a8a8;font-weight:400;letter-spacing:0.4px;-webkit-text-stroke:0.2px #a8a8a8;">Hotel</div>
<div class="a" style="left:924px;top:1115.6px;width:48px;height:48px;border-radius:7px;overflow:hidden;"><svg width="48" height="48" viewBox="0 0 48 48" style="left:0;top:0"><rect width="48" height="48" fill="#fff"/><path d="M13 11 V33 M17 11 V33 M33 11 V33 M37 11 V33 M13 15 H17 M13 20 H17 M33 15 H37 M33 20 H37" stroke="#e0553a" stroke-width="1.1"/><path d="M3 30 Q10 26 15 12 Q19 26 25 29 Q31 26 35 12 Q39 26 46 30" fill="none" stroke="#e0553a" stroke-width="1"/><path d="M2.5 29.8 H45.5" stroke="#e0553a" stroke-width="1.3"/><path d="M5 29.5 V27.5" stroke="#e0553a" stroke-width="0.5"/><path d="M8 29.5 V27.5" stroke="#e0553a" stroke-width="0.5"/><path d="M11 29.5 V26" stroke="#e0553a" stroke-width="0.5"/><path d="M19 29.5 V26" stroke="#e0553a" stroke-width="0.5"/><path d="M22 29.5 V26" stroke="#e0553a" stroke-width="0.5"/><path d="M25 29.5 V26" stroke="#e0553a" stroke-width="0.5"/><path d="M28 29.5 V26" stroke="#e0553a" stroke-width="0.5"/><path d="M31 29.5 V26" stroke="#e0553a" stroke-width="0.5"/><path d="M39 29.5 V26" stroke="#e0553a" stroke-width="0.5"/><path d="M42 29.5 V27.5" stroke="#e0553a" stroke-width="0.5"/><text x="24" y="37" font-size="3.8" fill="#e0553a" text-anchor="middle" font-family="Liberation Serif" textLength="38.5" lengthAdjust="spacingAndGlyphs">Lisbon-cowork.com</text></svg></div>
<div class="t " style="left:994.30px;top:1119.89px;font-size:16.9px;color:#e6e6e6;font-weight:400;">Lisbon-Cowork</div>
<div class="t " style="left:1183.20px;top:1119.13px;font-size:13.9px;color:#a6a6a6;font-weight:400;">Rua da Bela Vista à Graça 27A, 1170-058</div>
<div class="t " style="left:1183.20px;top:1137.43px;font-size:13.9px;color:#a6a6a6;font-weight:400;">Lisboa, Portugal</div>
<div class="t " style="left:1471.50px;top:1119.13px;font-size:13.9px;color:#a6a6a6;font-weight:400;">5.0</div>
<div class="a" style="left:924px;top:1206.6px;width:48px;height:48px;border-radius:7px;overflow:hidden;"><svg width="48" height="48" viewBox="0 0 48 48" style="left:0;top:0"><rect width="48" height="48" fill="#fff"/><text x="24" y="15.8" font-size="12" font-weight="700" fill="#2a2a2a" text-anchor="middle" font-family="Liberation Sans" textLength="27" lengthAdjust="spacingAndGlyphs">RES</text><text x="24.3" y="30.2" font-size="12" font-weight="700" fill="#2a2a2a" text-anchor="middle" font-family="Liberation Sans" textLength="28.5" lengthAdjust="spacingAndGlyphs">VÉS</text><path d="M9.5 34.9 H38.7" stroke="#333" stroke-width="0.9"/><text x="24.3" y="41.6" font-size="3.5" fill="#555" text-anchor="middle" font-family="Liberation Serif" textLength="21.5" lengthAdjust="spacingAndGlyphs">cowork space</text></svg></div>
<div class="t " style="left:994.30px;top:1210.89px;font-size:16.9px;color:#e6e6e6;font-weight:400;letter-spacing:-0.26px;">Resvés Cowork Space</div>
<div class="t " style="left:1183.20px;top:1210.13px;font-size:13.9px;color:#a6a6a6;font-weight:400;">R. Saraiva de Carvalho 1C, 1250-240</div>
<div class="t " style="left:1183.20px;top:1228.43px;font-size:13.9px;color:#a6a6a6;font-weight:400;">Lisboa, Portugal</div>
<div class="t " style="left:1471.50px;top:1210.13px;font-size:13.9px;color:#a6a6a6;font-weight:400;">4.9</div>
<div class="a" style="left:924px;top:1298.3px;width:48px;height:48px;border-radius:7px;overflow:hidden;"><svg width="48" height="48" viewBox="0 0 48 48" style="left:0;top:0"><rect width="48" height="48" fill="#151515"/><text x="24.2" y="24" font-size="11" fill="#f2f2f2" text-anchor="middle" font-family="Liberation Serif" textLength="33.5" lengthAdjust="spacingAndGlyphs">AVILA</text><text x="24" y="31.5" font-size="9.5" fill="#f2f2f2" text-anchor="middle" font-family="Liberation Serif" textLength="42.8" lengthAdjust="spacingAndGlyphs">SPACES</text></svg></div>
<div class="t " style="left:994.30px;top:1302.59px;font-size:16.9px;color:#e6e6e6;font-weight:400;letter-spacing:-0.2px;">Avila Spaces</div>
<div class="t " style="left:1183.20px;top:1301.83px;font-size:13.9px;color:#a6a6a6;font-weight:400;">Av. da República 6 1º esq, 1050-191</div>
<div class="t " style="left:1183.20px;top:1320.13px;font-size:13.9px;color:#a6a6a6;font-weight:400;">Lisboa, Portugal</div>
<div class="t " style="left:1471.50px;top:1301.83px;font-size:13.9px;color:#a6a6a6;font-weight:400;">4.9</div>
<div class="a" style="left:924px;top:1388px;width:48px;height:48px;border-radius:7px;overflow:hidden;"><svg width="48" height="48" viewBox="0 0 48 48" style="left:0;top:0"><rect width="48" height="48" fill="#fff"/><rect x="2" y="2" width="44" height="44" fill="none" stroke="#2a2a2a" stroke-width="1.2"/><text x="23.4" y="25" font-size="8" font-weight="700" fill="#111" text-anchor="middle" font-family="Liberation Sans" textLength="33" lengthAdjust="spacingAndGlyphs">IMPACT</text><text x="23.6" y="38.4" font-size="15.5" font-weight="700" fill="#111" text-anchor="middle" font-family="Liberation Sans" textLength="34" lengthAdjust="spacingAndGlyphs">HUB</text></svg></div>
<div class="t " style="left:994.30px;top:1392.29px;font-size:16.9px;color:#e6e6e6;font-weight:400;">Impact Hub Lisbon -</div>
<div class="t " style="left:994.30px;top:1413.89px;font-size:16.9px;color:#e6e6e6;font-weight:400;">Baixa</div>
<div class="t " style="left:1183.20px;top:1391.53px;font-size:13.9px;color:#a6a6a6;font-weight:400;">Tv. das Pedras Negras 1 1º Direito,</div>
<div class="t " style="left:1183.20px;top:1409.83px;font-size:13.9px;color:#a6a6a6;font-weight:400;">1100-404 Lisboa, Portugal</div>
<div class="t " style="left:1471.50px;top:1391.53px;font-size:13.9px;color:#a6a6a6;font-weight:400;">4.9</div>
<div class="a" style="left:903px;top:1183.8px;width:700px;height:1px;background:#303030;"></div>
<div class="a" style="left:903px;top:1275.1px;width:700px;height:1px;background:#303030;"></div>
<div class="a" style="left:903px;top:1365.2px;width:700px;height:1px;background:#303030;"></div>
</div></body></html>
